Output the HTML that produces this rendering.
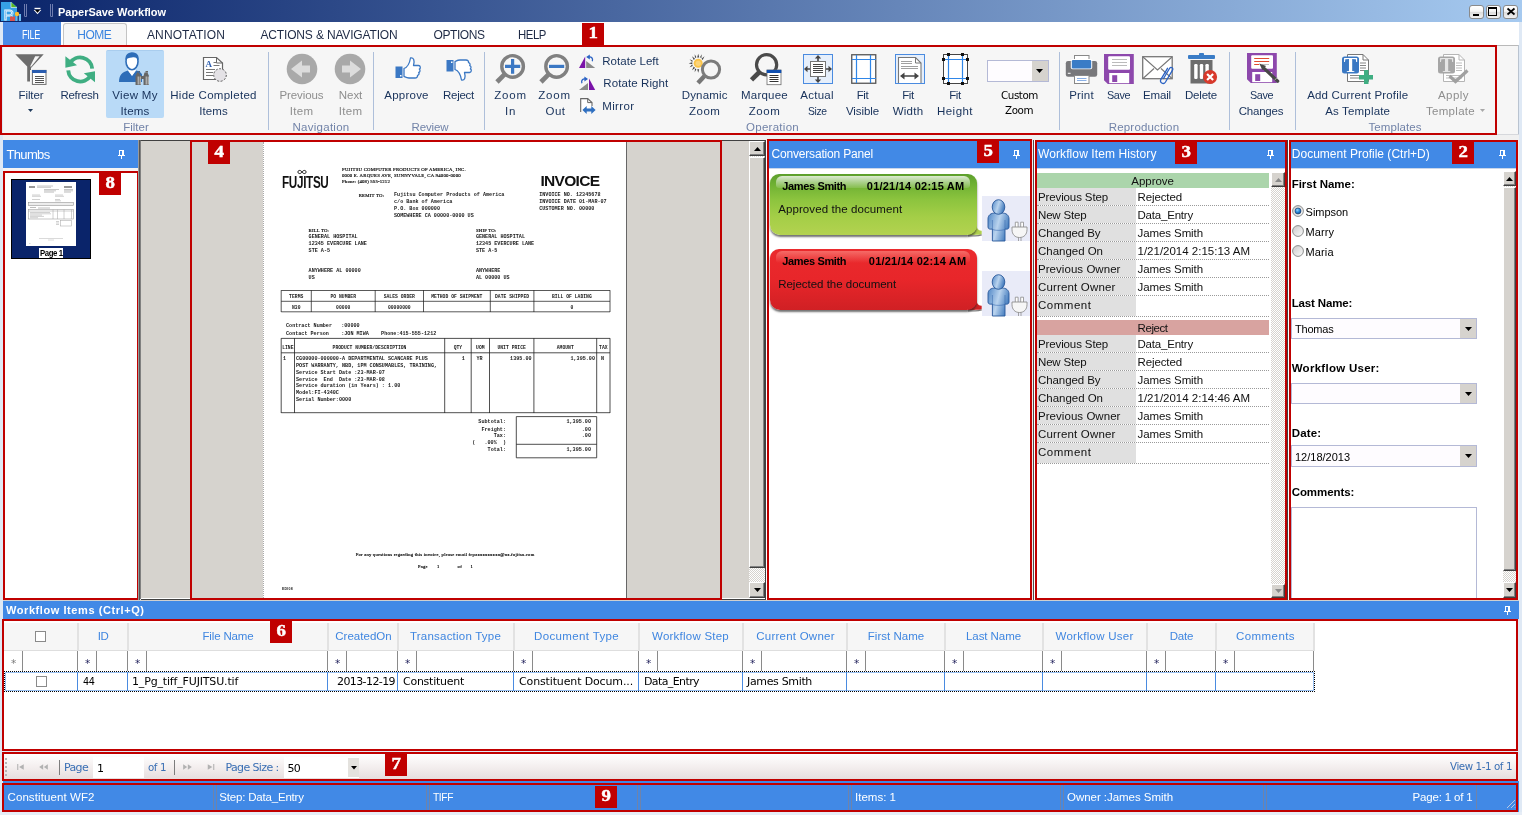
<!DOCTYPE html>
<html lang="en"><head><meta charset="utf-8"><title>PaperSave Workflow</title>
<style>
html,body{margin:0;padding:0}
body{width:1522px;height:815px;position:relative;overflow:hidden;background:#f0f0f0;font-family:"Liberation Sans",sans-serif;font-size:12px}
#app{position:absolute;left:0;top:0;width:1522px;height:815px;will-change:transform}
.b{position:absolute;box-sizing:content-box}
.t{position:absolute;white-space:pre}
svg{overflow:visible}
</style></head>
<body>
<div id="app">
<div class="b" style="left:0px;top:22px;width:1522px;height:793px;background:#dfe9f5;"></div>
<div class="b" style="left:0px;top:0px;width:1522px;height:22px;background:linear-gradient(90deg,#0a246a 0%,#a6caf0 100%);"></div>
<svg class="b" style="left:1px;top:2px" width="20" height="19" viewBox="0 0 20 19"><path d="M0 0h10.500l5.500 5v14H0z" fill="#36a0e6"/><path d="M10 0l6 5.500h-6z" fill="#5cb81e"/><path d="M10 0v5.500h6" fill="none" stroke="#d8ecfa" stroke-width=".7"/><text x="2.500" y="17.500" font-family="Liberation Sans,sans-serif" font-size="15.500" fill="#36a0e6" stroke="#e3f2fc" stroke-width=".9">P</text><rect x="9" y="14.500" width="5" height="4.500" fill="#d9534f"/><path d="M11.500 11.500v3M16 13v6" stroke="#8fd0f5" stroke-width="1"/><rect x="17.800" y="12" width="2.200" height="7" fill="#6cbcf0"/><circle cx="16" cy="12" r="2.200" fill="#fbbd2e"/></svg>
<div class="b" style="left:24px;top:4px;width:1px;height:12px;border:1px solid #6f7db0;border-top:none;border-radius:0 0 2px 2px;"></div>
<div class="b" style="left:50px;top:4px;width:1px;height:12px;border:1px solid #6f7db0;border-top:none;border-radius:0 0 2px 2px;"></div>
<svg class="b" style="left:34px;top:7px" width="8" height="8" viewBox="0 0 8 8"><path d="M.5 1.500h6" stroke="#fff" stroke-width="1.400"/><path d="M-.3 3h7.600l-3.800 4.300z" fill="#fff"/><path d="M.8 2.800h5.400l-2.700 3z" fill="#000"/></svg>
<span class="t" style="left:58.00px;top:5px;font-size:11px;line-height:15px;color:#fff;font-weight:700;letter-spacing:-0.034px;">PaperSave Workflow</span>
<div class="b" style="left:1469px;top:5px;width:13px;height:12px;border:1px solid #8a8a8a;border-radius:3px;background:linear-gradient(#ffffff,#f4f4f4 45%,#dcdcdc 50%,#f0f0f0);"></div>
<div class="b" style="left:1485.5px;top:5px;width:13px;height:12px;border:1px solid #8a8a8a;border-radius:3px;background:linear-gradient(#ffffff,#f4f4f4 45%,#dcdcdc 50%,#f0f0f0);"></div>
<div class="b" style="left:1503px;top:5px;width:13px;height:12px;border:1px solid #8a8a8a;border-radius:3px;background:linear-gradient(#ffffff,#f4f4f4 45%,#dcdcdc 50%,#f0f0f0);"></div>
<div class="b" style="left:1473px;top:14px;width:6px;height:2px;background:#000;"></div>
<div class="b" style="left:1488px;top:7px;width:7px;height:6px;border:1px solid #000;border-top:2px solid #000;"></div>
<svg class="b" style="left:1507px;top:8px" width="8" height="7" viewBox="0 0 8 7"><path d="M0.5 0.5l7 6M7.5 0.5l-7 6" stroke="#000" stroke-width="1.700"/></svg>
<div class="b" style="left:3px;top:22px;width:1516px;height:23px;background:#fff;"></div>
<div class="b" style="left:3px;top:22px;width:58px;height:23px;background:#4a8be6;"></div>
<span class="t" style="left:22.30px;top:28px;font-size:12px;line-height:14px;color:#fff;letter-spacing:-0.450px;transform:scaleX(0.7646);transform-origin:0 0;">FILE</span>
<div class="b" style="left:63px;top:23px;width:62px;height:23px;background:#f6f6f6;border:1px solid #c4c4c4;border-bottom:none;border-radius:3px 3px 0 0;"></div>
<span class="t" style="left:77.30px;top:28px;font-size:12px;line-height:14px;color:#3a84e0;letter-spacing:-0.500px;">HOME</span>
<span class="t" style="left:147.00px;top:28px;font-size:12px;line-height:14px;color:#1e2a45;letter-spacing:0.111px;">ANNOTATION</span>
<span class="t" style="left:260.50px;top:28px;font-size:12px;line-height:14px;color:#1e2a45;letter-spacing:-0.162px;">ACTIONS &amp; NAVIGATION</span>
<span class="t" style="left:433.50px;top:28px;font-size:12px;line-height:14px;color:#1e2a45;letter-spacing:-0.429px;">OPTIONS</span>
<span class="t" style="left:517.50px;top:28px;font-size:12px;line-height:14px;color:#1e2a45;letter-spacing:-0.450px;transform:scaleX(0.9476);transform-origin:0 0;">HELP</span>
<div class="b" style="left:582px;top:23px;width:22px;height:22px;background:#c00000;"></div>
<span class="t" style="left:588.58px;top:22.5px;font-size:16.5px;line-height:20px;color:#fff;font-weight:700;font-family:'Liberation Serif',serif;-webkit-text-stroke:.45px #fff;transform:scaleX(1.14);transform-origin:50% 50%;">1</span>
<div class="b" style="left:3px;top:45px;width:1515px;height:90px;background:#f6f6f6;border-top:1px solid #b9b9b9;height:89px;"></div>
<div class="b" style="left:1518px;top:45px;width:1px;height:90px;background:#b9c3d0;"></div>
<div class="b" style="left:3px;top:135px;width:1516px;height:4px;background:#f0f0f0;"></div>
<div class="b" style="left:3px;top:134px;width:1516px;height:1px;background:#d6d8dc;"></div>
<div class="b" style="left:0px;top:45px;width:1493px;height:86px;border:2px solid #c00000;"></div>
<div class="b" style="left:106px;top:50px;width:58px;height:68px;background:#b9daf7;border-radius:2px;border-top:1px solid #a9cdee;height:67px;"></div>
<div class="b" style="left:268px;top:52px;width:1px;height:78px;background:#aebfda;"></div>
<div class="b" style="left:373px;top:52px;width:1px;height:78px;background:#aebfda;"></div>
<div class="b" style="left:484px;top:52px;width:1px;height:78px;background:#aebfda;"></div>
<div class="b" style="left:1059px;top:52px;width:1px;height:78px;background:#aebfda;"></div>
<div class="b" style="left:1229px;top:52px;width:1px;height:78px;background:#aebfda;"></div>
<div class="b" style="left:1295px;top:52px;width:1px;height:78px;background:#aebfda;"></div>
<span class="t" style="left:18.50px;top:88px;font-size:11.5px;line-height:14px;color:#17315a;letter-spacing:-0.093px;">Filter</span>
<svg class="b" style="left:28px;top:109px" width="6" height="4" viewBox="0 0 6 4"><path d="M0 0h5l-2.5 3z" fill="#1e395b"/></svg>
<span class="t" style="left:60.50px;top:88px;font-size:11.5px;line-height:14px;color:#17315a;letter-spacing:-0.324px;">Refresh</span>
<span class="t" style="left:112.25px;top:88px;font-size:11.5px;line-height:14px;color:#17315a;letter-spacing:0.322px;">View My</span>
<span class="t" style="left:120.50px;top:104px;font-size:11.5px;line-height:14px;color:#17315a;letter-spacing:0.177px;">Items</span>
<span class="t" style="left:170.25px;top:88px;font-size:11.5px;line-height:14px;color:#17315a;letter-spacing:0.289px;">Hide Completed</span>
<span class="t" style="left:199.25px;top:104px;font-size:11.5px;line-height:14px;color:#17315a;letter-spacing:0.077px;">Items</span>
<span class="t" style="left:279.50px;top:88px;font-size:11.5px;line-height:14px;color:#8e8e8e;letter-spacing:-0.093px;">Previous</span>
<span class="t" style="left:289.75px;top:104px;font-size:11.5px;line-height:14px;color:#8e8e8e;letter-spacing:0.284px;">Item</span>
<span class="t" style="left:338.75px;top:88px;font-size:11.5px;line-height:14px;color:#8e8e8e;letter-spacing:-0.036px;">Next</span>
<span class="t" style="left:338.75px;top:104px;font-size:11.5px;line-height:14px;color:#8e8e8e;letter-spacing:0.284px;">Item</span>
<span class="t" style="left:384.25px;top:88px;font-size:11.5px;line-height:14px;color:#17315a;letter-spacing:0.238px;">Approve</span>
<span class="t" style="left:443.00px;top:88px;font-size:11.5px;line-height:14px;color:#17315a;letter-spacing:-0.266px;">Reject</span>
<span class="t" style="left:494.25px;top:88px;font-size:11.5px;line-height:14px;color:#17315a;letter-spacing:0.776px;">Zoom</span>
<span class="t" style="left:505.00px;top:104px;font-size:11.5px;line-height:14px;color:#17315a;letter-spacing:0.705px;">In</span>
<span class="t" style="left:538.25px;top:88px;font-size:11.5px;line-height:14px;color:#17315a;letter-spacing:0.776px;">Zoom</span>
<span class="t" style="left:545.50px;top:104px;font-size:11.5px;line-height:14px;color:#17315a;letter-spacing:0.488px;">Out</span>
<span class="t" style="left:602.30px;top:54px;font-size:11.5px;line-height:14px;color:#17315a;letter-spacing:0.022px;">Rotate Left</span>
<span class="t" style="left:603.30px;top:76px;font-size:11.5px;line-height:14px;color:#17315a;letter-spacing:0.090px;">Rotate Right</span>
<span class="t" style="left:602.30px;top:99px;font-size:11.5px;line-height:14px;color:#17315a;letter-spacing:0.330px;">Mirror</span>
<span class="t" style="left:681.70px;top:88px;font-size:11.5px;line-height:14px;color:#17315a;letter-spacing:0.181px;">Dynamic</span>
<span class="t" style="left:688.95px;top:104px;font-size:11.5px;line-height:14px;color:#17315a;letter-spacing:0.526px;">Zoom</span>
<span class="t" style="left:741.00px;top:88px;font-size:11.5px;line-height:14px;color:#17315a;letter-spacing:0.230px;">Marquee</span>
<span class="t" style="left:748.75px;top:104px;font-size:11.5px;line-height:14px;color:#17315a;letter-spacing:0.526px;">Zoom</span>
<span class="t" style="left:800.25px;top:88px;font-size:11.5px;line-height:14px;color:#17315a;letter-spacing:0.256px;">Actual</span>
<span class="t" style="left:807.75px;top:104px;font-size:11.5px;line-height:14px;color:#17315a;letter-spacing:-0.450px;transform:scaleX(0.8993);transform-origin:0 0;">Size</span>
<span class="t" style="left:856.75px;top:88px;font-size:11.5px;line-height:14px;color:#17315a;letter-spacing:-0.425px;">Fit</span>
<span class="t" style="left:846.00px;top:104px;font-size:11.5px;line-height:14px;color:#17315a;letter-spacing:-0.096px;">Visible</span>
<span class="t" style="left:902.25px;top:88px;font-size:11.5px;line-height:14px;color:#17315a;letter-spacing:-0.425px;">Fit</span>
<span class="t" style="left:892.75px;top:104px;font-size:11.5px;line-height:14px;color:#17315a;letter-spacing:0.221px;">Width</span>
<span class="t" style="left:949.25px;top:88px;font-size:11.5px;line-height:14px;color:#17315a;letter-spacing:-0.425px;">Fit</span>
<span class="t" style="left:937.00px;top:104px;font-size:11.5px;line-height:14px;color:#17315a;letter-spacing:0.460px;">Height</span>
<span class="t" style="left:1001.00px;top:89px;font-size:11px;line-height:14px;color:#000;font-family:'DejaVu Sans',sans-serif;letter-spacing:-0.450px;transform:scaleX(0.9381);transform-origin:0 0;">Custom</span>
<span class="t" style="left:1005.00px;top:104px;font-size:11px;line-height:14px;color:#000;font-family:'DejaVu Sans',sans-serif;letter-spacing:-0.450px;transform:scaleX(0.9361);transform-origin:0 0;">Zoom</span>
<span class="t" style="left:1069.25px;top:88px;font-size:11.5px;line-height:14px;color:#17315a;letter-spacing:0.171px;">Print</span>
<span class="t" style="left:1107.00px;top:88px;font-size:11.5px;line-height:14px;color:#17315a;letter-spacing:-0.450px;transform:scaleX(0.9422);transform-origin:0 0;">Save</span>
<span class="t" style="left:1143.00px;top:88px;font-size:11.5px;line-height:14px;color:#17315a;letter-spacing:-0.151px;">Email</span>
<span class="t" style="left:1185.00px;top:88px;font-size:11.5px;line-height:14px;color:#17315a;letter-spacing:-0.207px;">Delete</span>
<span class="t" style="left:1249.50px;top:88px;font-size:11.5px;line-height:14px;color:#17315a;letter-spacing:-0.450px;transform:scaleX(0.9422);transform-origin:0 0;">Save</span>
<span class="t" style="left:1238.75px;top:104px;font-size:11.5px;line-height:14px;color:#17315a;letter-spacing:-0.219px;">Changes</span>
<span class="t" style="left:1307.20px;top:88px;font-size:11.5px;line-height:14px;color:#17315a;letter-spacing:0.169px;">Add Current Profile</span>
<span class="t" style="left:1325.20px;top:104px;font-size:11.5px;line-height:14px;color:#17315a;letter-spacing:0.175px;">As Template</span>
<span class="t" style="left:1438.00px;top:88px;font-size:11.5px;line-height:14px;color:#8e8e8e;letter-spacing:0.447px;">Apply</span>
<span class="t" style="left:1426.00px;top:104px;font-size:11.5px;line-height:14px;color:#8e8e8e;letter-spacing:0.292px;">Template</span>
<svg class="b" style="left:1480px;top:109px" width="6" height="4" viewBox="0 0 6 4"><path d="M0 0h5l-2.5 3z" fill="#a8a8a8"/></svg>
<span class="t" style="left:123.25px;top:120px;font-size:11.5px;line-height:14px;color:#7283a8;letter-spacing:-0.009px;">Filter</span>
<span class="t" style="left:292.50px;top:120px;font-size:11.5px;line-height:14px;color:#7283a8;letter-spacing:0.266px;">Navigation</span>
<span class="t" style="left:411.50px;top:120px;font-size:11.5px;line-height:14px;color:#7283a8;letter-spacing:-0.118px;">Review</span>
<span class="t" style="left:746.00px;top:120px;font-size:11.5px;line-height:14px;color:#7283a8;letter-spacing:0.277px;">Operation</span>
<span class="t" style="left:1108.75px;top:120px;font-size:11.5px;line-height:14px;color:#7283a8;letter-spacing:0.175px;">Reproduction</span>
<span class="t" style="left:1368.50px;top:120px;font-size:11.5px;line-height:14px;color:#7283a8;letter-spacing:0.065px;">Templates</span>
<svg class="b" style="left:15px;top:53px" width="32" height="32" viewBox="0 0 32 32"><path d="M.3 1.300h28.400L16 15v2h-1v11.500h-2.800V13.500z" fill="#6d6d6d"/><path d="M20.200 3.200h4.400L16.300 13.500h-1.200z" fill="#f6f6f6"/><rect x="17.400" y="17.400" width="13.600" height="14" fill="#fff" stroke="#6d6d6d"/><rect x="17" y="17" width="14.400" height="3" fill="#2a5db0"/><path d="M20 23.500h9M20 25.500h9M20 27.500h9M20 29.500h9" stroke="#555" stroke-width="1"/></svg>
<svg class="b" style="left:64px;top:53px" width="32" height="32" viewBox="0 0 32 32"><g fill="none" stroke="#3fae82" stroke-width="3.900"><path d="M6 10.100A12 12 0 0 1 28.170 15.660"/><path d="M26.380 22.860A12 12 0 0 1 4.230 17.340"/></g><path d="M1.400 3.200v11.550l11.600-2.550z" fill="#3fae82"/><path d="M31 18.200v11.100L19.850 20.300z" fill="#3fae82"/></svg>
<svg class="b" style="left:119px;top:52px" width="32" height="33" viewBox="0 0 32 33"><path d="M0 30c0-7 3-10 9-11.5l4 5 4-5c3 .6 5 2 6 4v7.5z" fill="#2e6db8"/><path d="M9 18.5l4 5.5 4-5.5-1.5-1.5h-5z" fill="#fff"/><ellipse cx="13" cy="9.5" rx="6" ry="8.2" fill="#fff" stroke="#2e6db8" stroke-width="1.6"/><path d="M6.5 8C6 2 9.500 .5 13.500 .5S20.500 3 19.600 8.500C18 5.500 16 5 13 5.500S8 6 6.500 8z" fill="#2e6db8"/><path d="M16.500 33v-9l1.500-3.500h3l1 3.500h2.500l1-3.500h3l1.500 3.500v9h-5.500v-6h-2.500v6z" fill="#666"/><path d="M18.500 19h2.500v1.500h-2.500zM26.500 19h2.500v1.500h-2.500z" fill="#666"/><path d="M19.200 24.500v8M21.200 24.500v8M27.200 24.500v8M29.200 24.500v8" stroke="#e8e8e8" stroke-width=".8"/><path d="M22 23l-3-4" stroke="#2e6db8" stroke-width="1"/></svg>
<svg class="b" style="left:202px;top:56px" width="26" height="26" viewBox="0 0 26 26"><path d="M1.500 1.500h13l6 5.500V23.500H1.500z" fill="#fff" stroke="#666" stroke-width="1.2"/><path d="M14.500 1.500v5.500h6" fill="none" stroke="#666" stroke-width="1"/><text x="3.500" y="10.500" font-family="Liberation Serif,serif" font-size="9" font-weight="700" fill="#2e5fb0">A</text><path d="M11.500 6.500h3M11.500 9.500h6M4 13.500h9M4 16.500h7M4 19.500h7" stroke="#777" stroke-width="1"/><circle cx="18" cy="19" r="6.300" fill="#e4e2e6" stroke="#555" stroke-width="1" stroke-dasharray="2 1.500"/></svg>
<svg class="b" style="left:286px;top:53px" width="32" height="32" viewBox="0 0 32 32"><circle cx="16" cy="16" r="15.300" fill="#a9a9a9"/><path d="M5 16l11-8.500v5h8v7h-8v5z" fill="#dcdcdc"/></svg>
<svg class="b" style="left:334px;top:53px" width="32" height="32" viewBox="0 0 32 32"><circle cx="16" cy="16" r="15.300" fill="#a9a9a9"/><path d="M27 16L16 7.500v5H8v7h8v5z" fill="#dcdcdc"/></svg>
<svg class="b" style="left:394.7px;top:56px" width="27" height="24" viewBox="0 0 27 24"><rect x=".5" y="10.500" width="7" height="11.500" fill="#3b78c4"/><rect x="5" y="19" width="1.500" height="1.500" fill="#fff"/><path d="M9 12.500c3-1 5.500-4.500 6.500-10.500 3-.5 4.500 2 3 7.500h5c2 0 2.500 3 .8 3.600 1.200 1 .8 3-.6 3.300 .8 1.200 .2 2.800-1.200 3 .3 1.500-.8 2.600-2.500 2.600h-6c-2 0-3.500-.8-5-1.500z" fill="#fff" stroke="#3b78c4" stroke-width="1.300" stroke-linejoin="round"/></svg>
<svg class="b" style="left:445.7px;top:58px" width="27" height="24" viewBox="0 0 27 24"><rect x=".5" y="2" width="7" height="11.500" fill="#3b78c4"/><rect x="5" y="3.500" width="1.500" height="1.500" fill="#fff"/><path d="M9 11.500c3 1 5.500 4.500 6.500 10.500 3 .5 4.500-2 3-7.500h5c2 0 2.500-3 .8-3.600 1.200-1 .8-3-.6-3.300 .8-1.200 .2-2.800-1.200-3 .3-1.500-.8-2.600-2.500-2.600h-6c-2 0-3.500 .8-5 1.500z" fill="#fff" stroke="#3b78c4" stroke-width="1.300" stroke-linejoin="round"/></svg>
<svg class="b" style="left:494px;top:53px" width="32" height="32" viewBox="0 0 32 32"><path d="M11.300 20.700l-8.300 8.300" stroke="#808080" stroke-width="4.700"/><circle cx="18.600" cy="13.400" r="10.800" fill="#f6f6f6" stroke="#808080" stroke-width="3.400"/><path d="M11 13.400h15.200M18.600 6v14.800" stroke="#3b78c4" stroke-width="3.200"/></svg>
<svg class="b" style="left:537.8px;top:53px" width="32" height="32" viewBox="0 0 32 32"><path d="M11.300 20.700l-8.300 8.300" stroke="#808080" stroke-width="4.700"/><circle cx="18.600" cy="13.400" r="10.800" fill="#f6f6f6" stroke="#808080" stroke-width="3.400"/><path d="M11 13.400h15.200" stroke="#3b78c4" stroke-width="3.200"/></svg>
<svg class="b" style="left:579px;top:54px" width="17" height="15" viewBox="0 0 17 15"><path d="M6.200 2.600v11.400H0z" fill="#7a12a8"/><path d="M7.200 7l9 7h-9z" fill="#8a8a8a"/><path d="M13.300 7.300c1-3-1-5-3.800-4.300" fill="none" stroke="#2a62c4" stroke-width="1.300"/><path d="M7.200 3l3.600-2.600v5z" fill="#2a62c4"/></svg>
<svg class="b" style="left:579px;top:76px" width="17" height="15" viewBox="0 0 17 15"><path d="M10 2.600v11.400h6.200z" fill="#7a12a8"/><path d="M9 7L0 14h9z" fill="#8a8a8a"/><path d="M2.900 7.300c-1-3 1-5 3.800-4.300" fill="none" stroke="#2a62c4" stroke-width="1.300"/><path d="M9 3L5.400 .4v5z" fill="#2a62c4"/></svg>
<svg class="b" style="left:579.5px;top:98px" width="17" height="17" viewBox="0 0 17 17"><path d="M.7 14V.6h7l4.300 4V8" fill="#fff" stroke="#666" stroke-width="1.100"/><path d="M7.700 .6v4h4.300" fill="none" stroke="#666"/><path d="M2.400 12l4.300-4v2.600h4.600V8l4.300 4-4.300 4v-2.600H6.700V16z" fill="#2f6fc0"/></svg>
<svg class="b" style="left:689px;top:53px" width="33" height="32" viewBox="0 0 33 32"><g fill="#444"><path d="M9.200 .8l1 3.600h-2zM9.200 19.800l1-3.600h-2zM-.3 10.300l3.600 1v-2zM3 3.300l3 2.400-1.200 1.300zM15.500 3.300l-3 2.400 1.200 1.300zM3 17.300l3-2.400-1.200-1.300zM5.700 1.300l1.700 3-1.400.7zM12.700 1.300l-1.700 3 1.400.7zM.6 6.300l3.200 1.400-.7 1.400zM.6 14.300l3.200-1.400-.7-1.400zM5.700 19.300l1.700-3-1.400-.7z"/></g><circle cx="9.200" cy="10.300" r="4.500" fill="#fbc44a"/><circle cx="9.200" cy="10.300" r="2.600" fill="#fdd57a"/><path d="M15.500 23l-6.500 7" stroke="#777" stroke-width="4.400"/><circle cx="22" cy="16.500" r="8.600" fill="#f6f6f6" fill-opacity=".75" stroke="#7c7c7c" stroke-width="3"/></svg>
<svg class="b" style="left:749px;top:53px" width="33" height="32" viewBox="0 0 33 32"><path d="M10.500 19l-8 7.800" stroke="#4a4a4a" stroke-width="4.600"/><circle cx="17.600" cy="11.700" r="10.100" fill="#f6f6f6" stroke="#4a4a4a" stroke-width="3.200"/><rect x="18" y="17" width="14" height="14.700" fill="#fff" stroke="#6d6d6d" stroke-width=".8"/><rect x="17.700" y="16.900" width="14.600" height="3.100" fill="#0f4fb0"/><path d="M20.500 22.500h9M20.500 24.500h9M20.500 26.500h9M20.500 28.500h9" stroke="#333" stroke-width="1"/></svg>
<svg class="b" style="left:803px;top:54px" width="30" height="30" viewBox="0 0 30 30"><rect x=".5" y=".5" width="29" height="29" fill="#e6effb" stroke="#4a8be0"/><rect x="7.500" y="7.500" width="15" height="15" fill="#fff" stroke="#777"/><path d="M10 10.500h10M10 12.500h10M10 14.500h10M10 16.500h10M10 18.500h10" stroke="#444" stroke-width="1"/><path d="M15 1l3.200 3.500h-2.400V7h-1.600V4.500h-2.400zM15 29l3.200-3.500h-2.400V23h-1.600v2.500h-2.400zM1 15l3.500-3.200v2.400H7v1.600H4.500v2.400zM29 15l-3.500-3.200v2.400H23v1.600h2.500v2.400z" fill="#444"/></svg>
<svg class="b" style="left:851px;top:54px" width="26" height="30" viewBox="0 0 26 30"><rect x=".75" y=".75" width="24" height="28.500" fill="#fff" stroke="#555" stroke-width="1.300"/><path d="M5.500 1v28M19.500 1v28M1 5.500h24M1 24.500h24" stroke="#2f86e8" stroke-width="1.200"/></svg>
<svg class="b" style="left:895px;top:54px" width="31" height="30" viewBox="0 0 31 30"><rect x=".5" y=".5" width="29" height="29" fill="#e6effb" stroke="#4a8be0"/><path d="M3.500 29V3.500h17l5.500 5.500V29" fill="#fff" stroke="#777" stroke-width="1.100"/><path d="M20.500 3.500V9H26" fill="none" stroke="#777"/><path d="M6 7.500h11M6 9.500h11M6 12.500h17M6 14.500h17" stroke="#888" stroke-width=".8"/><path d="M5 22l4.500-3.500v2.700h10v-2.700L24 22l-4.500 3.500v-2.700h-10v2.700z" fill="#444"/></svg>
<svg class="b" style="left:942px;top:53px" width="27" height="32" viewBox="0 0 27 32"><rect x="1.500" y="1.500" width="24" height="29" fill="#fff" stroke="#444" stroke-width="1"/><path d="M6.500 2v28M20.500 2v28M2 6.500h23M2 25.500h23" stroke="#2f86e8" stroke-width="1.200"/><g fill="#111"><rect x="5" y="0" width="3" height="3"/><rect x="19" y="0" width="3" height="3"/><rect x="5" y="29" width="3" height="3"/><rect x="19" y="29" width="3" height="3"/><rect x="0" y="5" width="3" height="3"/><rect x="0" y="24" width="3" height="3"/><rect x="24" y="5" width="3" height="3"/><rect x="24" y="24" width="3" height="3"/></g></svg>
<div class="b" style="left:987px;top:60px;width:60px;height:20px;background:#fefcff;border:1px solid #b4b9d6;"></div>
<div class="b" style="left:1032px;top:61px;width:16px;height:20px;background:#d6d3ce;"></div>
<svg class="b" style="left:1036px;top:69px" width="8" height="5" viewBox="0 0 8 5"><path d="M0 0h7l-3.500 4z" fill="#000"/></svg>
<svg class="b" style="left:1065px;top:54px" width="33" height="30" viewBox="0 0 33 30"><rect x="9.500" y="1.500" width="14.500" height="8" fill="#fff" stroke="#888"/><rect x=".8" y="7" width="31.400" height="15.800" rx="2.200" fill="#78787b"/><rect x="5.800" y="5" width="21.400" height="10.200" rx="1.800" fill="#fff"/><rect x="6.800" y="6" width="19.400" height="8.400" rx="1.200" fill="#3a7cc6"/><rect x="9.500" y="21.500" width="14.500" height="8" fill="#fff" stroke="#888"/><path d="M12 24.500h9.500M12 26.500h9.500" stroke="#8ab0e6" stroke-width="1"/><rect x="2.800" y="18.800" width="2.800" height="1" fill="#fff"/></svg>
<svg class="b" style="left:1103.5px;top:53.5px" width="31" height="31" viewBox="0 0 31 31"><path d="M0 0h29.800v30H3.800L0 26.200z" fill="#8d48ac"/><rect x="4.200" y="2.200" width="21.800" height="13.600" rx="1" fill="#fff"/><path d="M8 5.500h15M8 8.500h15M8 11.500h15" stroke="#bbb" stroke-width="1"/><rect x="5.200" y="19" width="20" height="10.200" fill="#fff"/><rect x="8.200" y="21.200" width="5" height="6.800" fill="#8d48ac"/></svg>
<svg class="b" style="left:1142px;top:56px" width="32" height="29" viewBox="0 0 32 29"><rect x=".7" y=".7" width="29.500" height="22" fill="#fff" stroke="#777" stroke-width="1.300"/><path d="M1 1l14.500 13L30 1M1 22.500l11-10M30 22.500l-11-10" fill="none" stroke="#777" stroke-width="1.100"/><path d="M21.500 22.500l6-10c1.400-2.200 4.300-.5 3 1.700l-7 11.800c-2 3.200-6.500 .5-4.600-2.700l6.600-11" fill="none" stroke="#2a62c4" stroke-width="1.300" stroke-linecap="round"/></svg>
<svg class="b" style="left:1188px;top:52px" width="30" height="33" viewBox="0 0 30 33"><rect x="0" y="3" width="27" height="4" rx="1" fill="#3a7cc6"/><rect x="11" y="1" width="5" height="3" rx=".8" fill="#3a7cc6"/><path d="M2.500 8h22v23.500h-22z" fill="#6d6d6d"/><g fill="#fff"><rect x="6.200" y="12" width="3.400" height="15" rx="1.200"/><rect x="11.800" y="12" width="3.400" height="15" rx="1.200"/><rect x="17.400" y="12" width="3.400" height="10" rx="1.200"/></g><circle cx="22.100" cy="25" r="7" fill="#d8392b"/><path d="M19.100 22l6 6M25.100 22l-6 6" stroke="#fff" stroke-width="2.200"/></svg>
<svg class="b" style="left:1246.5px;top:53px" width="31" height="31" viewBox="0 0 31 31"><path d="M0 0h29.800v30H3.800L0 26.200z" fill="#8d48ac"/><rect x="4.200" y="2.200" width="21.800" height="13.600" rx="1" fill="#fff"/><path d="M7.200 5.500h15M7.200 8.500h15M7.200 11.500h5" stroke="#e04a2f" stroke-width="1"/><path d="M15 11.500h7" stroke="#bbb" stroke-width="1"/><rect x="5.200" y="19" width="20" height="10.200" fill="#fff"/><rect x="8.200" y="21.200" width="5" height="6.800" fill="#8d48ac"/></svg>
<svg class="b" style="left:1258px;top:60px" width="22" height="24" viewBox="0 0 22 24"><path d="M5.500 7.800l14.200 13.400" stroke="#484848" stroke-width="3.200" stroke-linecap="round"/><path d="M1.300 3.500l6.800 2.600-3.800 3.800z" fill="#484848"/><path d="M16.500 20.300l2.600-2.700" stroke="#b8b8b8" stroke-width=".9"/></svg>
<svg class="b" style="left:1342px;top:54px" width="32" height="30" viewBox="0 0 32 30"><path d="M5.500 .5h15.500l5.500 5.500V27.500H5.500z" fill="#fff" stroke="#777" stroke-width="1"/><path d="M21 .5V6h5.500" fill="none" stroke="#777"/><path d="M18 9h6M18 11.500h6M18 14h6M18 16.500h6M8 21.500h16M8 24h16" stroke="#777" stroke-width=".9"/><rect x="0" y="2.500" width="17" height="17" rx="2.500" fill="#3a78c3"/><text x="8.500" y="17.800" text-anchor="middle" font-family="Liberation Serif,serif" font-size="20.500" font-weight="700" fill="#fff">T</text></svg>
<svg class="b" style="left:1359px;top:70px" width="14" height="14" viewBox="0 0 14 14"><path d="M5 0h4.500v5H14v4.500H9.500V14H5V9.500H0V5h5z" fill="#3fae82"/></svg>
<svg class="b" style="left:1438px;top:54px" width="32" height="30" viewBox="0 0 32 30"><path d="M5.500 .5h15.500l5.500 5.500V27.500H5.500z" fill="#fff" stroke="#b5b5b5" stroke-width="1"/><path d="M21 .5V6h5.500" fill="none" stroke="#b5b5b5"/><path d="M18 9h6M18 11.500h6M18 14h6M18 16.500h6M8 21.500h16M8 24h16" stroke="#b5b5b5" stroke-width=".9"/><rect x="0" y="2.500" width="17" height="17" rx="2.500" fill="#a6a6a6"/><text x="8.500" y="17.800" text-anchor="middle" font-family="Liberation Serif,serif" font-size="20.500" font-weight="700" fill="#e6e6e6">T</text></svg>
<svg class="b" style="left:1448px;top:69px" width="21" height="15" viewBox="0 0 21 15"><path d="M1.500 7l6 5.500L19.500 1.500" fill="none" stroke="#a0a0a0" stroke-width="3.200"/></svg>
<div class="b" style="left:3px;top:139px;width:1516px;height:462px;background:#f0f0f0;"></div>
<div class="b" style="left:3px;top:140px;width:135px;height:28px;background:#4189e6;"></div>
<span class="t" style="left:6.50px;top:147px;font-size:13px;line-height:16px;color:#fff;letter-spacing:-0.660px;">Thumbs</span>
<svg class="b" style="left:118px;top:150px" width="7" height="9" viewBox="0 0 7 9"><g fill="#fff" shape-rendering="crispEdges"><rect x="1" y="0" width="5" height="1"/><rect x="1" y="0" width="1" height="5"/><rect x="4" y="0" width="2" height="5"/><rect x="0" y="5" width="7" height="1"/><rect x="3" y="6" width="1" height="3"/></g></svg>
<div class="b" style="left:3px;top:168px;width:136px;height:3px;background:#f4f4f4;"></div>
<div class="b" style="left:5px;top:173px;width:132px;height:425px;background:#fff;"></div>
<div class="b" style="left:3px;top:171px;width:132px;height:425px;border:2px solid #c00000;"></div>
<div class="b" style="left:11px;top:179px;width:78px;height:78px;background:#0a246a;border:1px solid #000;"></div>
<div class="b" style="left:26px;top:182px;width:50px;height:64px;background:#fff;"></div>
<div class="b" style="left:39px;top:248px;width:24px;height:10px;background:#fff;"></div>
<span class="t" style="left:39.70px;top:248px;font-size:8.5px;line-height:10px;color:#000;font-weight:700;letter-spacing:-0.450px;transform:scaleX(0.9148);transform-origin:0 0;">Page 1</span>
<div class="b" style="left:99px;top:173px;width:22px;height:22px;background:#c00000;"></div>
<span class="t" style="left:105.58px;top:172.5px;font-size:16.5px;line-height:20px;color:#fff;font-weight:700;font-family:'Liberation Serif',serif;-webkit-text-stroke:.45px #fff;transform:scaleX(1.14);transform-origin:50% 50%;">8</span>
<svg class="b" style="left:26px;top:182px" width="50" height="64" viewBox="0 0 50 64"><g stroke="#aaa" stroke-width=".55" fill="none"><path d="M3 5h6M38 5h8" stroke="#333" stroke-width="1.100"/><path d="M11 4h16M11 5.300h14" stroke="#999"/><path d="M18 7.500h15M18 8.800h12M18 10.100h10M38 7.500h9M38 8.800h9M38 10.100h7" stroke="#999"/><path d="M6 13h8M6 14.300h9M29 13h8M29 14.300h9M6 17.500h8M29 17.500h5M29 18.800h6" stroke="#aaa"/><rect x="2.500" y="20.500" width="45" height="3" stroke="#888"/><path d="M2.500 22h45" stroke="#bbb"/><path d="M4 25.500h6M12 26h12" stroke="#888"/><rect x="2.500" y="27.500" width="45" height="9.500" stroke="#999"/><path d="M2.500 29h45M27 27.500v9.500M31.500 27.500v9.500M38 27.500v9.500M45.500 27.500v9.500" stroke="#aaa"/><path d="M4 30.500h20M4 31.800h21M4 33.100h12M4 34.400h14M4 35.700h8" stroke="#aaa"/><rect x="34.500" y="38.500" width="11" height="5.500" stroke="#aaa"/><path d="M30 39.500h3M30 41h3M30 42.500h3" stroke="#aaa"/><path d="M13 56.500h24M22 58h6M3 61.500h1.500" stroke="#bbb"/></g></svg>
<div class="b" style="left:138px;top:140px;width:1px;height:460px;background:#9a9a9a;"></div>
<div class="b" style="left:139px;top:140px;width:1px;height:460px;background:#555;"></div>
<div class="b" style="left:140px;top:140px;width:625px;height:459px;background:#d6d3ce;border-top:1px solid #404040;border-left:1px solid #808080;width:624px;height:458px;"></div>
<div class="b" style="left:141px;top:598px;width:49px;height:1px;background:#fff;"></div>
<div class="b" style="left:141px;top:599px;width:49px;height:1px;background:#404040;"></div>
<div class="b" style="left:765px;top:140px;width:1px;height:460px;background:#404040;"></div>
<div class="b" style="left:766px;top:140px;width:1px;height:460px;background:#fff;"></div>
<div class="b" style="left:749px;top:141px;width:16px;height:457px;background:repeating-conic-gradient(#fff 0 25%,#d6d3ce 0 50%) 0 0/2px 2px;"></div>
<div class="b" style="left:749px;top:141px;width:14px;height:13px;background:#d6d3ce;border:1px solid;border-color:#fff #404040 #404040 #fff;box-shadow:inset -1px -1px 0 #808080;"></div>
<svg class="b" style="left:753.5px;top:146.5px" width="7" height="4" viewBox="0 0 7 4"><path d="M0 4h7l-3.500-4z" fill="#000"/></svg>
<div class="b" style="left:749px;top:157px;width:14px;height:409px;background:#d6d3ce;border:1px solid;border-color:#fff #404040 #404040 #fff;box-shadow:inset -1px -1px 0 #808080;"></div>
<div class="b" style="left:749px;top:582px;width:14px;height:14px;background:#d6d3ce;border:1px solid;border-color:#fff #404040 #404040 #fff;box-shadow:inset -1px -1px 0 #808080;"></div>
<svg class="b" style="left:753.5px;top:588.0px" width="7" height="4" viewBox="0 0 7 4"><path d="M0 0h7l-3.500 4z" fill="#000"/></svg>
<div class="b" style="left:722px;top:598px;width:43px;height:1px;background:#fff;"></div>
<div class="b" style="left:722px;top:599px;width:43px;height:1px;background:#404040;"></div>
<div class="b" style="left:769px;top:141px;width:261px;height:457px;background:#fff;"></div>
<div class="b" style="left:769px;top:141px;width:261px;height:27px;background:#4189e6;"></div>
<div class="b" style="left:769px;top:168px;width:261px;height:1px;background:#c9d6ea;"></div>
<span class="t" style="left:771.50px;top:147px;font-size:12px;line-height:15px;color:#fff;letter-spacing:-0.180px;">Conversation Panel</span>
<svg class="b" style="left:1013px;top:150px" width="7" height="9" viewBox="0 0 7 9"><g fill="#fff" shape-rendering="crispEdges"><rect x="1" y="0" width="5" height="1"/><rect x="1" y="0" width="1" height="5"/><rect x="4" y="0" width="2" height="5"/><rect x="0" y="5" width="7" height="1"/><rect x="3" y="6" width="1" height="3"/></g></svg>
<svg class="b" style="left:968px;top:221px" width="15" height="14" viewBox="0 0 15 14"><path d="M0 14V0h9v6.500c.5 2 2 3 4.700 3.300v3.400C11 13.800 5 14 0 14z" fill="#b0d04f"/><path d="M0 14.800h7c3 0 5-.4 6.700-1" stroke="rgba(40,40,40,.6)" stroke-width="1.300" fill="none"/></svg>
<div class="b" style="left:770px;top:174px;width:207px;height:61px;border-radius:9px 9px 10px 10px;background:linear-gradient(#5d9f2c 0%,#6eb033 16%,#8cc43e 42%,#a4ce47 70%,#b3d250 100%);box-shadow:0 2px 2px rgba(40,40,40,.65);"></div>
<div class="b" style="left:776px;top:176px;width:194px;height:12px;border-radius:6px 6px 3px 3px;background:linear-gradient(rgba(255,255,255,.78),rgba(255,255,255,.12));"></div>
<span class="t" style="left:782.20px;top:179px;font-size:11px;line-height:14px;color:#000;font-weight:700;letter-spacing:-0.351px;">James Smith</span>
<span class="t" style="left:866.80px;top:179px;font-size:11px;line-height:14px;color:#000;font-weight:700;letter-spacing:0.226px;">01/21/14 02:15 AM</span>
<span class="t" style="left:778.20px;top:202px;font-size:11.5px;line-height:15px;color:#111;letter-spacing:0.090px;">Approved the document</span>
<div class="b" style="left:982px;top:196px;width:48px;height:45px;background:#e9ebf8;"></div>
<svg class="b" style="left:982px;top:196px" width="48" height="45" viewBox="0 0 48 45"><defs><linearGradient id="pg174" x1="0" y1="0" x2="1" y2=".35"><stop offset="0" stop-color="#4f86c6"/><stop offset=".55" stop-color="#b9d3ee"/><stop offset="1" stop-color="#4a80c0"/></linearGradient></defs><path d="M6 23c0-4 3-6 7-6h7c4 0 7 2 7 6v8c0 2-2 2.500-4 2v12H10.400V33c-2.400.5-4.400 0-4.400-2z" fill="url(#pg174)" stroke="#27579a" stroke-width=".9"/><path d="M10.400 33V24M23 33V24M10.400 33.500c4 1.200 8.600 1.200 12.600 0" fill="none" stroke="#3a6cb0" stroke-width=".6"/><ellipse cx="16.500" cy="11" rx="6.300" ry="7.300" fill="url(#pg174)" stroke="#27579a" stroke-width=".9"/><path d="M33.300 31v-4.800h2.800V31M38.700 31v-4.800h2.800V31" fill="#fff" stroke="#8a8a8a" stroke-width=".8"/><path d="M30 31h15v2.500c0 5-3 8-7.500 8s-7.500-3-7.500-8z" fill="#f6f6f6" stroke="#8e8e8e" stroke-width=".9"/><path d="M36.500 41.500v3.500M39 41.500v3.500" stroke="#8e8e8e" stroke-width=".8"/></svg>
<svg class="b" style="left:968px;top:296px" width="15" height="14" viewBox="0 0 15 14"><path d="M0 14V0h9v6.500c.5 2 2 3 4.700 3.300v3.400C11 13.800 5 14 0 14z" fill="#cf2024"/><path d="M0 14.800h7c3 0 5-.4 6.700-1" stroke="rgba(40,40,40,.6)" stroke-width="1.300" fill="none"/></svg>
<div class="b" style="left:770px;top:249px;width:207px;height:61px;border-radius:9px 9px 10px 10px;background:linear-gradient(#ea2a2d 0%,#e8262a 50%,#d02024 100%);box-shadow:0 2px 2px rgba(40,40,40,.65);"></div>
<div class="b" style="left:776px;top:251px;width:194px;height:12px;border-radius:6px 6px 3px 3px;background:linear-gradient(rgba(255,160,150,.55),rgba(255,120,110,0));"></div>
<span class="t" style="left:782.20px;top:254px;font-size:11px;line-height:14px;color:#000;font-weight:700;letter-spacing:-0.351px;">James Smith</span>
<span class="t" style="left:868.80px;top:254px;font-size:11px;line-height:14px;color:#000;font-weight:700;letter-spacing:0.226px;">01/21/14 02:14 AM</span>
<span class="t" style="left:778.20px;top:277px;font-size:11.5px;line-height:15px;color:#111;letter-spacing:-0.013px;">Rejected the document</span>
<div class="b" style="left:982px;top:271px;width:48px;height:45px;background:#e9ebf8;"></div>
<svg class="b" style="left:982px;top:271px" width="48" height="45" viewBox="0 0 48 45"><defs><linearGradient id="pg249" x1="0" y1="0" x2="1" y2=".35"><stop offset="0" stop-color="#4f86c6"/><stop offset=".55" stop-color="#b9d3ee"/><stop offset="1" stop-color="#4a80c0"/></linearGradient></defs><path d="M6 23c0-4 3-6 7-6h7c4 0 7 2 7 6v8c0 2-2 2.500-4 2v12H10.400V33c-2.400.5-4.400 0-4.400-2z" fill="url(#pg249)" stroke="#27579a" stroke-width=".9"/><path d="M10.400 33V24M23 33V24M10.400 33.500c4 1.200 8.600 1.200 12.600 0" fill="none" stroke="#3a6cb0" stroke-width=".6"/><ellipse cx="16.500" cy="11" rx="6.300" ry="7.300" fill="url(#pg249)" stroke="#27579a" stroke-width=".9"/><path d="M33.300 31v-4.800h2.800V31M38.700 31v-4.800h2.800V31" fill="#fff" stroke="#8a8a8a" stroke-width=".8"/><path d="M30 31h15v2.500c0 5-3 8-7.500 8s-7.500-3-7.500-8z" fill="#f6f6f6" stroke="#8e8e8e" stroke-width=".9"/><path d="M36.500 41.500v3.500M39 41.500v3.500" stroke="#8e8e8e" stroke-width=".8"/></svg>
<div class="b" style="left:767px;top:139px;width:261px;height:457px;border:2px solid #c00000;"></div>
<div class="b" style="left:977px;top:141px;width:22px;height:22px;background:#c00000;"></div>
<span class="t" style="left:983.58px;top:140.5px;font-size:16.5px;line-height:20px;color:#fff;font-weight:700;font-family:'Liberation Serif',serif;-webkit-text-stroke:.45px #fff;transform:scaleX(1.14);transform-origin:50% 50%;">5</span>
<div class="b" style="left:1033px;top:140px;width:1px;height:460px;background:#505050;"></div>
<div class="b" style="left:1034px;top:140px;width:1px;height:460px;background:#fff;"></div>
<div class="b" style="left:1037px;top:142px;width:248px;height:456px;background:#fff;"></div>
<div class="b" style="left:1037px;top:142px;width:248px;height:26px;background:#4189e6;"></div>
<div class="b" style="left:1037px;top:168px;width:248px;height:1px;background:#c9d6ea;"></div>
<span class="t" style="left:1038.00px;top:147px;font-size:12px;line-height:15px;color:#fff;letter-spacing:0.097px;">Workflow Item History</span>
<svg class="b" style="left:1267px;top:150px" width="7" height="9" viewBox="0 0 7 9"><g fill="#fff" shape-rendering="crispEdges"><rect x="1" y="0" width="5" height="1"/><rect x="1" y="0" width="1" height="5"/><rect x="4" y="0" width="2" height="5"/><rect x="0" y="5" width="7" height="1"/><rect x="3" y="6" width="1" height="3"/></g></svg>
<div class="b" style="left:1037px;top:173px;width:232px;height:15px;background:#abd5ab;"></div>
<span class="t" style="left:1131.35px;top:174px;font-size:11.5px;line-height:14px;color:#111;letter-spacing:-0.048px;">Approve</span>
<div class="b" style="left:1037px;top:188px;width:99px;height:17px;background:#e0e0e0;"></div>
<div class="b" style="left:1037px;top:205px;width:232px;height:0px;border-top:1px dotted #9a9a9a;"></div>
<span class="t" style="left:1038.00px;top:190px;font-size:11.5px;line-height:14px;color:#111;letter-spacing:-0.123px;">Previous Step</span>
<span class="t" style="left:1137.50px;top:190px;font-size:11.5px;line-height:14px;color:#111;letter-spacing:-0.111px;">Rejected</span>
<div class="b" style="left:1037px;top:206px;width:99px;height:17px;background:#e0e0e0;"></div>
<div class="b" style="left:1037px;top:223px;width:232px;height:0px;border-top:1px dotted #9a9a9a;"></div>
<span class="t" style="left:1038.00px;top:208px;font-size:11.5px;line-height:14px;color:#111;letter-spacing:-0.170px;">New Step</span>
<span class="t" style="left:1137.50px;top:208px;font-size:11.5px;line-height:14px;color:#111;letter-spacing:-0.203px;">Data_Entry</span>
<div class="b" style="left:1037px;top:224px;width:99px;height:17px;background:#e0e0e0;"></div>
<div class="b" style="left:1037px;top:241px;width:232px;height:0px;border-top:1px dotted #9a9a9a;"></div>
<span class="t" style="left:1038.00px;top:226px;font-size:11.5px;line-height:14px;color:#111;letter-spacing:-0.080px;">Changed By</span>
<span class="t" style="left:1137.50px;top:226px;font-size:11.5px;line-height:14px;color:#111;letter-spacing:-0.087px;">James Smith</span>
<div class="b" style="left:1037px;top:242px;width:99px;height:17px;background:#e0e0e0;"></div>
<div class="b" style="left:1037px;top:259px;width:232px;height:0px;border-top:1px dotted #9a9a9a;"></div>
<span class="t" style="left:1038.00px;top:244px;font-size:11.5px;line-height:14px;color:#111;letter-spacing:-0.022px;">Changed On</span>
<span class="t" style="left:1137.50px;top:244px;font-size:11.5px;line-height:14px;color:#111;">1/21/2014 2:15:13 AM</span>
<div class="b" style="left:1037px;top:260px;width:99px;height:17px;background:#e0e0e0;"></div>
<div class="b" style="left:1037px;top:277px;width:232px;height:0px;border-top:1px dotted #9a9a9a;"></div>
<span class="t" style="left:1038.00px;top:262px;font-size:11.5px;line-height:14px;color:#111;letter-spacing:0.049px;">Previous Owner</span>
<span class="t" style="left:1137.50px;top:262px;font-size:11.5px;line-height:14px;color:#111;letter-spacing:-0.087px;">James Smith</span>
<div class="b" style="left:1037px;top:278px;width:99px;height:17px;background:#e0e0e0;"></div>
<div class="b" style="left:1037px;top:295px;width:232px;height:0px;border-top:1px dotted #9a9a9a;"></div>
<span class="t" style="left:1038.00px;top:280px;font-size:11.5px;line-height:14px;color:#111;letter-spacing:0.161px;">Current Owner</span>
<span class="t" style="left:1137.50px;top:280px;font-size:11.5px;line-height:14px;color:#111;letter-spacing:-0.087px;">James Smith</span>
<div class="b" style="left:1037px;top:296px;width:99px;height:20px;background:#e0e0e0;"></div>
<div class="b" style="left:1037px;top:316px;width:232px;height:0px;border-top:1px dotted #9a9a9a;"></div>
<span class="t" style="left:1038.00px;top:298px;font-size:11.5px;line-height:14px;color:#111;letter-spacing:0.522px;">Comment</span>
<div class="b" style="left:1037px;top:320px;width:232px;height:15px;background:#d8a3a0;"></div>
<span class="t" style="left:1137.60px;top:321px;font-size:11.5px;line-height:14px;color:#111;letter-spacing:-0.433px;">Reject</span>
<div class="b" style="left:1037px;top:335px;width:99px;height:17px;background:#e0e0e0;"></div>
<div class="b" style="left:1037px;top:352px;width:232px;height:0px;border-top:1px dotted #9a9a9a;"></div>
<span class="t" style="left:1038.00px;top:337px;font-size:11.5px;line-height:14px;color:#111;letter-spacing:-0.123px;">Previous Step</span>
<span class="t" style="left:1137.50px;top:337px;font-size:11.5px;line-height:14px;color:#111;letter-spacing:-0.203px;">Data_Entry</span>
<div class="b" style="left:1037px;top:353px;width:99px;height:17px;background:#e0e0e0;"></div>
<div class="b" style="left:1037px;top:370px;width:232px;height:0px;border-top:1px dotted #9a9a9a;"></div>
<span class="t" style="left:1038.00px;top:355px;font-size:11.5px;line-height:14px;color:#111;letter-spacing:-0.170px;">New Step</span>
<span class="t" style="left:1137.50px;top:355px;font-size:11.5px;line-height:14px;color:#111;letter-spacing:-0.111px;">Rejected</span>
<div class="b" style="left:1037px;top:371px;width:99px;height:17px;background:#e0e0e0;"></div>
<div class="b" style="left:1037px;top:388px;width:232px;height:0px;border-top:1px dotted #9a9a9a;"></div>
<span class="t" style="left:1038.00px;top:373px;font-size:11.5px;line-height:14px;color:#111;letter-spacing:-0.080px;">Changed By</span>
<span class="t" style="left:1137.50px;top:373px;font-size:11.5px;line-height:14px;color:#111;letter-spacing:-0.087px;">James Smith</span>
<div class="b" style="left:1037px;top:389px;width:99px;height:17px;background:#e0e0e0;"></div>
<div class="b" style="left:1037px;top:406px;width:232px;height:0px;border-top:1px dotted #9a9a9a;"></div>
<span class="t" style="left:1038.00px;top:391px;font-size:11.5px;line-height:14px;color:#111;letter-spacing:-0.022px;">Changed On</span>
<span class="t" style="left:1137.50px;top:391px;font-size:11.5px;line-height:14px;color:#111;">1/21/2014 2:14:46 AM</span>
<div class="b" style="left:1037px;top:407px;width:99px;height:17px;background:#e0e0e0;"></div>
<div class="b" style="left:1037px;top:424px;width:232px;height:0px;border-top:1px dotted #9a9a9a;"></div>
<span class="t" style="left:1038.00px;top:409px;font-size:11.5px;line-height:14px;color:#111;letter-spacing:0.049px;">Previous Owner</span>
<span class="t" style="left:1137.50px;top:409px;font-size:11.5px;line-height:14px;color:#111;letter-spacing:-0.087px;">James Smith</span>
<div class="b" style="left:1037px;top:425px;width:99px;height:17px;background:#e0e0e0;"></div>
<div class="b" style="left:1037px;top:442px;width:232px;height:0px;border-top:1px dotted #9a9a9a;"></div>
<span class="t" style="left:1038.00px;top:427px;font-size:11.5px;line-height:14px;color:#111;letter-spacing:0.161px;">Current Owner</span>
<span class="t" style="left:1137.50px;top:427px;font-size:11.5px;line-height:14px;color:#111;letter-spacing:-0.087px;">James Smith</span>
<div class="b" style="left:1037px;top:443px;width:99px;height:20px;background:#e0e0e0;"></div>
<div class="b" style="left:1037px;top:463px;width:232px;height:0px;border-top:1px dotted #9a9a9a;"></div>
<span class="t" style="left:1038.00px;top:445px;font-size:11.5px;line-height:14px;color:#111;letter-spacing:0.522px;">Comment</span>
<div class="b" style="left:1271px;top:172px;width:14px;height:426px;background:repeating-conic-gradient(#fff 0 25%,#d6d3ce 0 50%) 0 0/2px 2px;"></div>
<div class="b" style="left:1271px;top:172px;width:12px;height:13px;background:#d6d3ce;border:1px solid;border-color:#fff #404040 #404040 #fff;box-shadow:inset -1px -1px 0 #808080;"></div>
<svg class="b" style="left:1274.5px;top:177.5px" width="7" height="4" viewBox="0 0 7 4"><path d="M0 4h7l-3.500-4z" fill="#8a8a8a"/></svg>
<div class="b" style="left:1271px;top:584px;width:12px;height:12px;background:#d6d3ce;border:1px solid;border-color:#fff #404040 #404040 #fff;box-shadow:inset -1px -1px 0 #808080;"></div>
<svg class="b" style="left:1274.5px;top:589.0px" width="7" height="4" viewBox="0 0 7 4"><path d="M0 0h7l-3.500 4z" fill="#8a8a8a"/></svg>
<div class="b" style="left:1035px;top:140px;width:248px;height:456px;border:2px solid #c00000;"></div>
<div class="b" style="left:1175px;top:142px;width:22px;height:22px;background:#c00000;"></div>
<span class="t" style="left:1181.58px;top:141.5px;font-size:16.5px;line-height:20px;color:#fff;font-weight:700;font-family:'Liberation Serif',serif;-webkit-text-stroke:.45px #fff;transform:scaleX(1.14);transform-origin:50% 50%;">3</span>
<div class="b" style="left:1287px;top:140px;width:1px;height:460px;background:#404040;"></div>
<div class="b" style="left:1288px;top:140px;width:1px;height:460px;background:#fff;"></div>
<div class="b" style="left:1291px;top:142px;width:225px;height:456px;background:#fff;"></div>
<div class="b" style="left:1291px;top:142px;width:225px;height:26px;background:#4189e6;"></div>
<div class="b" style="left:1291px;top:168px;width:225px;height:1px;background:#c9d6ea;"></div>
<span class="t" style="left:1291.80px;top:147px;font-size:12px;line-height:15px;color:#fff;letter-spacing:0.012px;">Document Profile (Ctrl+D)</span>
<svg class="b" style="left:1499px;top:150px" width="7" height="9" viewBox="0 0 7 9"><g fill="#fff" shape-rendering="crispEdges"><rect x="1" y="0" width="5" height="1"/><rect x="1" y="0" width="1" height="5"/><rect x="4" y="0" width="2" height="5"/><rect x="0" y="5" width="7" height="1"/><rect x="3" y="6" width="1" height="3"/></g></svg>
<span class="t" style="left:1291.70px;top:177px;font-size:11.5px;line-height:14px;color:#000;font-weight:700;letter-spacing:-0.024px;">First Name:</span>
<span class="t" style="left:1291.70px;top:296px;font-size:11.5px;line-height:14px;color:#000;font-weight:700;letter-spacing:-0.149px;">Last Name:</span>
<span class="t" style="left:1291.70px;top:361px;font-size:11.5px;line-height:14px;color:#000;font-weight:700;letter-spacing:0.276px;">Workflow User:</span>
<span class="t" style="left:1291.70px;top:426px;font-size:11.5px;line-height:14px;color:#000;font-weight:700;letter-spacing:0.149px;">Date:</span>
<span class="t" style="left:1291.70px;top:485px;font-size:11.5px;line-height:14px;color:#000;font-weight:700;letter-spacing:-0.084px;">Comments:</span>
<svg class="b" style="left:1291.5px;top:205px" width="12" height="12" viewBox="0 0 12 12"><defs><radialGradient id="rg211" cx=".4" cy=".35" r=".7"><stop offset="0" stop-color="#9ad4f5"/><stop offset=".5" stop-color="#2a8ad8"/><stop offset="1" stop-color="#0c3f86"/></radialGradient><linearGradient id="rb211" x1="0" y1="0" x2="1" y2="1"><stop offset="0" stop-color="#c9c9c9"/><stop offset="1" stop-color="#fbfbfb"/></linearGradient></defs><circle cx="6" cy="6" r="5.400" fill="url(#rb211)" stroke="#8e8f8f" stroke-width="1"/><circle cx="6" cy="6" r="3" fill="url(#rg211)" stroke="#193b66" stroke-width=".6"/></svg>
<span class="t" style="left:1305.60px;top:204.5px;font-size:11px;line-height:14px;color:#000;letter-spacing:-0.028px;">Simpson</span>
<svg class="b" style="left:1291.5px;top:225px" width="12" height="12" viewBox="0 0 12 12"><defs><radialGradient id="rg231" cx=".4" cy=".35" r=".7"><stop offset="0" stop-color="#9ad4f5"/><stop offset=".5" stop-color="#2a8ad8"/><stop offset="1" stop-color="#0c3f86"/></radialGradient><linearGradient id="rb231" x1="0" y1="0" x2="1" y2="1"><stop offset="0" stop-color="#c9c9c9"/><stop offset="1" stop-color="#fbfbfb"/></linearGradient></defs><circle cx="6" cy="6" r="5.400" fill="url(#rb231)" stroke="#8e8f8f" stroke-width="1"/></svg>
<span class="t" style="left:1305.60px;top:224.5px;font-size:11px;line-height:14px;color:#000;letter-spacing:0.079px;">Marry</span>
<svg class="b" style="left:1291.5px;top:245px" width="12" height="12" viewBox="0 0 12 12"><defs><radialGradient id="rg251" cx=".4" cy=".35" r=".7"><stop offset="0" stop-color="#9ad4f5"/><stop offset=".5" stop-color="#2a8ad8"/><stop offset="1" stop-color="#0c3f86"/></radialGradient><linearGradient id="rb251" x1="0" y1="0" x2="1" y2="1"><stop offset="0" stop-color="#c9c9c9"/><stop offset="1" stop-color="#fbfbfb"/></linearGradient></defs><circle cx="6" cy="6" r="5.400" fill="url(#rb251)" stroke="#8e8f8f" stroke-width="1"/></svg>
<span class="t" style="left:1305.60px;top:244.5px;font-size:11px;line-height:14px;color:#000;letter-spacing:0.099px;">Maria</span>
<div class="b" style="left:1291px;top:318px;width:184px;height:19px;background:#fefcff;border:1px solid #b4b9d6;"></div>
<div class="b" style="left:1460px;top:319px;width:16px;height:19px;background:#d6d3ce;"></div>
<svg class="b" style="left:1464.5px;top:326.5px" width="8" height="5" viewBox="0 0 8 5"><path d="M0 0h7l-3.500 4z" fill="#000"/></svg>
<span class="t" style="left:1295.00px;top:322.0px;font-size:11px;line-height:14px;color:#000;letter-spacing:-0.206px;">Thomas</span>
<div class="b" style="left:1291px;top:383px;width:184px;height:19px;background:#fefcff;border:1px solid #b4b9d6;"></div>
<div class="b" style="left:1460px;top:384px;width:16px;height:19px;background:#d6d3ce;"></div>
<svg class="b" style="left:1464.5px;top:391.5px" width="8" height="5" viewBox="0 0 8 5"><path d="M0 0h7l-3.500 4z" fill="#000"/></svg>
<div class="b" style="left:1291px;top:445px;width:184px;height:20px;background:#fefcff;border:1px solid #b4b9d6;"></div>
<div class="b" style="left:1460px;top:446px;width:16px;height:20px;background:#d6d3ce;"></div>
<svg class="b" style="left:1464.5px;top:454.0px" width="8" height="5" viewBox="0 0 8 5"><path d="M0 0h7l-3.500 4z" fill="#000"/></svg>
<span class="t" style="left:1295.00px;top:449.5px;font-size:11px;line-height:14px;color:#000;letter-spacing:-0.005px;">12/18/2013</span>
<div class="b" style="left:1291px;top:507px;width:184px;height:91px;background:#fff;border:1px solid #b4b9d6;border-bottom:none;"></div>
<div class="b" style="left:1503px;top:171px;width:13px;height:427px;background:repeating-conic-gradient(#fff 0 25%,#d6d3ce 0 50%) 0 0/2px 2px;"></div>
<div class="b" style="left:1503px;top:171px;width:11px;height:13px;background:#d6d3ce;border:1px solid;border-color:#fff #404040 #404040 #fff;box-shadow:inset -1px -1px 0 #808080;"></div>
<svg class="b" style="left:1506.0px;top:176.5px" width="7" height="4" viewBox="0 0 7 4"><path d="M0 4h7l-3.500-4z" fill="#000"/></svg>
<div class="b" style="left:1503px;top:187px;width:11px;height:382px;background:#d6d3ce;border:1px solid;border-color:#fff #404040 #404040 #fff;box-shadow:inset -1px -1px 0 #808080;"></div>
<div class="b" style="left:1503px;top:582px;width:11px;height:14px;background:#d6d3ce;border:1px solid;border-color:#fff #404040 #404040 #fff;box-shadow:inset -1px -1px 0 #808080;"></div>
<svg class="b" style="left:1506.0px;top:588.0px" width="7" height="4" viewBox="0 0 7 4"><path d="M0 0h7l-3.500 4z" fill="#000"/></svg>
<div class="b" style="left:1289px;top:140px;width:225px;height:456px;border:2px solid #c00000;"></div>
<div class="b" style="left:1452px;top:142px;width:22px;height:22px;background:#c00000;"></div>
<span class="t" style="left:1458.58px;top:141.5px;font-size:16.5px;line-height:20px;color:#fff;font-weight:700;font-family:'Liberation Serif',serif;-webkit-text-stroke:.45px #fff;transform:scaleX(1.14);transform-origin:50% 50%;">2</span>
<div class="b" style="left:263px;top:142px;width:364px;height:456px;background:#fff;border-left:1px dotted #aaa;border-right:1px solid #666;width:362px;"></div>
<span class="t" style="left:282.00px;top:169.5px;font-size:16px;line-height:26px;color:#111;font-weight:700;letter-spacing:-0.450px;transform:scaleX(0.7320);transform-origin:0 0;">FUJITSU</span>
<svg class="b" style="left:296.5px;top:168.5px" width="10" height="6" viewBox="0 0 10 6"><path d="M5 3C3.800 1 1 .8 1 3s2.800 2 4 0c1.200-2 4-2.200 4 0s-2.800 2-4 0z" fill="none" stroke="#111" stroke-width="1"/></svg>
<span class="t" style="left:342.00px;top:165.9px;font-size:4.8px;line-height:7px;color:#000;font-family:'Liberation Serif',serif;letter-spacing:0.225px;-webkit-text-stroke:.15px #000;">FUJITSU COMPUTER PRODUCTS OF AMERICA, INC.</span>
<span class="t" style="left:342.00px;top:172px;font-size:4.8px;line-height:7px;color:#000;font-family:'Liberation Serif',serif;letter-spacing:0.214px;-webkit-text-stroke:.15px #000;">0000 E. ARQUES AVE, SUNNYVALE, CA 94000-0000</span>
<span class="t" style="left:342.00px;top:178.2px;font-size:4.8px;line-height:7px;color:#000;font-family:'Liberation Serif',serif;letter-spacing:0.165px;-webkit-text-stroke:.15px #000;">Phone: (408) 555-1212</span>
<span class="t" style="left:540.40px;top:172px;font-size:15.5px;line-height:18px;color:#111;font-weight:700;letter-spacing:-0.676px;">INVOICE</span>
<span class="t" style="left:358.70px;top:192px;font-size:4.8px;line-height:7px;color:#000;font-family:'Liberation Serif',serif;letter-spacing:0.211px;-webkit-text-stroke:.15px #000;">REMIT TO:</span>
<span class="t" style="left:394.00px;top:192.3px;font-size:5.1px;line-height:7px;color:#1a1a1a;font-weight:700;font-family:'Liberation Mono',monospace;letter-spacing:0.010px;">Fujitsu Computer Products of America</span>
<span class="t" style="left:394.00px;top:199.2px;font-size:5.1px;line-height:7px;color:#1a1a1a;font-weight:700;font-family:'Liberation Mono',monospace;letter-spacing:0.010px;">c/o Bank of America</span>
<span class="t" style="left:394.00px;top:206.0px;font-size:5.1px;line-height:7px;color:#1a1a1a;font-weight:700;font-family:'Liberation Mono',monospace;letter-spacing:0.010px;">P.O. Box 000000</span>
<span class="t" style="left:394.00px;top:213.0px;font-size:5.1px;line-height:7px;color:#1a1a1a;font-weight:700;font-family:'Liberation Mono',monospace;letter-spacing:0.010px;">SOMEWHERE CA 00000-0000 US</span>
<span class="t" style="left:539.20px;top:192.3px;font-size:5.1px;line-height:7px;color:#1a1a1a;font-weight:700;font-family:'Liberation Mono',monospace;letter-spacing:0.010px;">INVOICE NO. 12345678</span>
<span class="t" style="left:539.20px;top:199.2px;font-size:5.1px;line-height:7px;color:#1a1a1a;font-weight:700;font-family:'Liberation Mono',monospace;letter-spacing:0.010px;">INVOICE DATE 01-MAR-07</span>
<span class="t" style="left:539.20px;top:206.0px;font-size:5.1px;line-height:7px;color:#1a1a1a;font-weight:700;font-family:'Liberation Mono',monospace;letter-spacing:0.010px;">CUSTOMER NO. 00000</span>
<span class="t" style="left:308.60px;top:226.5px;font-size:4.8px;line-height:7px;color:#000;font-family:'Liberation Serif',serif;letter-spacing:0.157px;-webkit-text-stroke:.15px #000;">BILL TO:</span>
<span class="t" style="left:475.90px;top:226.5px;font-size:4.8px;line-height:7px;color:#000;font-family:'Liberation Serif',serif;letter-spacing:0.189px;-webkit-text-stroke:.15px #000;">SHIP TO:</span>
<span class="t" style="left:308.60px;top:233.6px;font-size:5.1px;line-height:7px;color:#1a1a1a;font-weight:700;font-family:'Liberation Mono',monospace;letter-spacing:0.010px;">GENERAL HOSPITAL</span>
<span class="t" style="left:308.60px;top:240.7px;font-size:5.1px;line-height:7px;color:#1a1a1a;font-weight:700;font-family:'Liberation Mono',monospace;letter-spacing:0.010px;">12345 EVERCURE LANE</span>
<span class="t" style="left:308.60px;top:247.5px;font-size:5.1px;line-height:7px;color:#1a1a1a;font-weight:700;font-family:'Liberation Mono',monospace;letter-spacing:0.010px;">STE A-5</span>
<span class="t" style="left:475.90px;top:233.6px;font-size:5.1px;line-height:7px;color:#1a1a1a;font-weight:700;font-family:'Liberation Mono',monospace;letter-spacing:0.010px;">GENERAL HOSPITAL</span>
<span class="t" style="left:475.90px;top:240.7px;font-size:5.1px;line-height:7px;color:#1a1a1a;font-weight:700;font-family:'Liberation Mono',monospace;letter-spacing:0.010px;">12345 EVERCURE LANE</span>
<span class="t" style="left:475.90px;top:247.5px;font-size:5.1px;line-height:7px;color:#1a1a1a;font-weight:700;font-family:'Liberation Mono',monospace;letter-spacing:0.010px;">STE A-5</span>
<span class="t" style="left:308.60px;top:268.3px;font-size:5.1px;line-height:7px;color:#1a1a1a;font-weight:700;font-family:'Liberation Mono',monospace;letter-spacing:0.010px;">ANYWHERE AL 00000</span>
<span class="t" style="left:308.60px;top:275.1px;font-size:5.1px;line-height:7px;color:#1a1a1a;font-weight:700;font-family:'Liberation Mono',monospace;letter-spacing:0.010px;">US</span>
<span class="t" style="left:475.90px;top:268.3px;font-size:5.1px;line-height:7px;color:#1a1a1a;font-weight:700;font-family:'Liberation Mono',monospace;letter-spacing:0.010px;">ANYWHERE</span>
<span class="t" style="left:475.90px;top:275.1px;font-size:5.1px;line-height:7px;color:#1a1a1a;font-weight:700;font-family:'Liberation Mono',monospace;letter-spacing:0.010px;">AL 00000 US</span>
<svg class="b" style="left:0px;top:0px" width="1" height="1" viewBox="0 0 1 1"><path d="M281.2 290.500H610M281.2 301.300H610M281.2 311.800H610M281.2 290.200V312M311.3 290.200V312M375.2 290.200V312M423.5 290.200V312M490.3 290.200V312M533.9 290.200V312M610 290.200V312" stroke="#222" stroke-width=".75" fill="none"/></svg>
<span class="t" style="left:289.12px;top:293.1px;font-size:4.7px;line-height:7px;color:#1a1a1a;font-weight:700;font-family:'Liberation Mono',monospace;letter-spacing:0.030px;">TERMS</span>
<span class="t" style="left:291.98px;top:303.9px;font-size:4.7px;line-height:7px;color:#1a1a1a;font-weight:700;font-family:'Liberation Mono',monospace;letter-spacing:0.030px;">N30</span>
<span class="t" style="left:330.43px;top:293.1px;font-size:4.7px;line-height:7px;color:#1a1a1a;font-weight:700;font-family:'Liberation Mono',monospace;letter-spacing:0.030px;">PO NUMBER</span>
<span class="t" style="left:336.12px;top:303.9px;font-size:4.7px;line-height:7px;color:#1a1a1a;font-weight:700;font-family:'Liberation Mono',monospace;letter-spacing:0.030px;">00000</span>
<span class="t" style="left:383.68px;top:293.1px;font-size:4.7px;line-height:7px;color:#1a1a1a;font-weight:700;font-family:'Liberation Mono',monospace;letter-spacing:0.030px;">SALES ORDER</span>
<span class="t" style="left:387.95px;top:303.9px;font-size:4.7px;line-height:7px;color:#1a1a1a;font-weight:700;font-family:'Liberation Mono',monospace;letter-spacing:0.030px;">00000000</span>
<span class="t" style="left:431.25px;top:293.1px;font-size:4.7px;line-height:7px;color:#1a1a1a;font-weight:700;font-family:'Liberation Mono',monospace;letter-spacing:0.030px;">METHOD OF SHIPMENT</span>
<span class="t" style="left:495.00px;top:293.1px;font-size:4.7px;line-height:7px;color:#1a1a1a;font-weight:700;font-family:'Liberation Mono',monospace;letter-spacing:0.030px;">DATE SHIPPED</span>
<span class="t" style="left:552.00px;top:293.1px;font-size:4.7px;line-height:7px;color:#1a1a1a;font-weight:700;font-family:'Liberation Mono',monospace;letter-spacing:0.030px;">BILL OF LADING</span>
<span class="t" style="left:570.54px;top:303.9px;font-size:4.7px;line-height:7px;color:#1a1a1a;font-weight:700;font-family:'Liberation Mono',monospace;">0</span>
<span class="t" style="left:286.00px;top:323.2px;font-size:5.1px;line-height:7px;color:#1a1a1a;font-weight:700;font-family:'Liberation Mono',monospace;letter-spacing:0.010px;">Contract Number   :00000</span>
<span class="t" style="left:286.00px;top:331.4px;font-size:5.1px;line-height:7px;color:#1a1a1a;font-weight:700;font-family:'Liberation Mono',monospace;letter-spacing:0.010px;">Contact Person    :JON MIWA    Phone:415-555-1212</span>
<svg class="b" style="left:0px;top:0px" width="1" height="1" viewBox="0 0 1 1"><path d="M281.2 338.400H610M281.2 352.800H610M281.2 412.700H610M281.2 338.200V413M294.5 338.200V413M444.7 338.200V413M471.2 338.200V413M489.5 338.200V413M533.9 338.200V413M596.7 338.200V413M610 338.200V413" stroke="#222" stroke-width=".8" fill="none"/></svg>
<span class="t" style="left:282.15px;top:343.5px;font-size:4.7px;line-height:7px;color:#1a1a1a;font-weight:700;font-family:'Liberation Mono',monospace;letter-spacing:0.030px;">LINE</span>
<span class="t" style="left:332.55px;top:343.5px;font-size:4.7px;line-height:7px;color:#1a1a1a;font-weight:700;font-family:'Liberation Mono',monospace;letter-spacing:0.030px;">PRODUCT NUMBER/DESCRIPTION</span>
<span class="t" style="left:453.68px;top:343.5px;font-size:4.7px;line-height:7px;color:#1a1a1a;font-weight:700;font-family:'Liberation Mono',monospace;letter-spacing:0.030px;">QTY</span>
<span class="t" style="left:476.08px;top:343.5px;font-size:4.7px;line-height:7px;color:#1a1a1a;font-weight:700;font-family:'Liberation Mono',monospace;letter-spacing:0.030px;">UOM</span>
<span class="t" style="left:497.45px;top:343.5px;font-size:4.7px;line-height:7px;color:#1a1a1a;font-weight:700;font-family:'Liberation Mono',monospace;letter-spacing:0.030px;">UNIT PRICE</span>
<span class="t" style="left:556.75px;top:343.5px;font-size:4.7px;line-height:7px;color:#1a1a1a;font-weight:700;font-family:'Liberation Mono',monospace;letter-spacing:0.030px;">AMOUNT</span>
<span class="t" style="left:599.08px;top:343.5px;font-size:4.7px;line-height:7px;color:#1a1a1a;font-weight:700;font-family:'Liberation Mono',monospace;letter-spacing:0.030px;">TAX</span>
<span class="t" style="left:283.00px;top:355.6px;font-size:5.1px;line-height:7px;color:#1a1a1a;font-weight:700;font-family:'Liberation Mono',monospace;">1</span>
<span class="t" style="left:296.00px;top:355.6px;font-size:5.1px;line-height:7px;color:#1a1a1a;font-weight:700;font-family:'Liberation Mono',monospace;letter-spacing:0.010px;">CG00000-000000-A DEPARTMENTAL SCANCARE PLUS</span>
<span class="t" style="left:296.00px;top:362.5px;font-size:5.1px;line-height:7px;color:#1a1a1a;font-weight:700;font-family:'Liberation Mono',monospace;letter-spacing:0.010px;">POST WARRANTY, NBD, 1PM CONSUMABLES, TRAINING,</span>
<span class="t" style="left:296.00px;top:369.6px;font-size:5.1px;line-height:7px;color:#1a1a1a;font-weight:700;font-family:'Liberation Mono',monospace;letter-spacing:0.010px;">Service Start Date :23-MAR-07</span>
<span class="t" style="left:296.00px;top:376.5px;font-size:5.1px;line-height:7px;color:#1a1a1a;font-weight:700;font-family:'Liberation Mono',monospace;letter-spacing:0.010px;">Service  End  Date :23-MAR-08</span>
<span class="t" style="left:296.00px;top:382.9px;font-size:5.1px;line-height:7px;color:#1a1a1a;font-weight:700;font-family:'Liberation Mono',monospace;letter-spacing:0.010px;">Service duration (in Years) : 1.00</span>
<span class="t" style="left:296.00px;top:390.0px;font-size:5.1px;line-height:7px;color:#1a1a1a;font-weight:700;font-family:'Liberation Mono',monospace;letter-spacing:0.010px;">Model:FI-4340C</span>
<span class="t" style="left:296.00px;top:397.0px;font-size:5.1px;line-height:7px;color:#1a1a1a;font-weight:700;font-family:'Liberation Mono',monospace;letter-spacing:0.010px;">Serial Number:0000</span>
<span class="t" style="left:461.64px;top:355.6px;font-size:5.1px;line-height:7px;color:#1a1a1a;font-weight:700;font-family:'Liberation Mono',monospace;">1</span>
<span class="t" style="left:476.50px;top:355.6px;font-size:5.1px;line-height:7px;color:#1a1a1a;font-weight:700;font-family:'Liberation Mono',monospace;letter-spacing:0.010px;">YR</span>
<span class="t" style="left:510.11px;top:355.6px;font-size:5.1px;line-height:7px;color:#1a1a1a;font-weight:700;font-family:'Liberation Mono',monospace;letter-spacing:0.010px;">1395.00</span>
<span class="t" style="left:570.44px;top:355.6px;font-size:5.1px;line-height:7px;color:#1a1a1a;font-weight:700;font-family:'Liberation Mono',monospace;letter-spacing:0.010px;">1,395.00</span>
<span class="t" style="left:601.00px;top:355.6px;font-size:5.1px;line-height:7px;color:#1a1a1a;font-weight:700;font-family:'Liberation Mono',monospace;">N</span>
<span class="t" style="left:478.37px;top:419.4px;font-size:5.1px;line-height:7px;color:#1a1a1a;font-weight:700;font-family:'Liberation Mono',monospace;letter-spacing:0.010px;">Subtotal:</span>
<span class="t" style="left:481.44px;top:426.5px;font-size:5.1px;line-height:7px;color:#1a1a1a;font-weight:700;font-family:'Liberation Mono',monospace;letter-spacing:0.010px;">Freight:</span>
<span class="t" style="left:493.72px;top:433.3px;font-size:5.1px;line-height:7px;color:#1a1a1a;font-weight:700;font-family:'Liberation Mono',monospace;letter-spacing:0.010px;">Tax:</span>
<span class="t" style="left:472.23px;top:440.2px;font-size:5.1px;line-height:7px;color:#1a1a1a;font-weight:700;font-family:'Liberation Mono',monospace;letter-spacing:0.010px;">(   .00%  )</span>
<span class="t" style="left:487.58px;top:447.1px;font-size:5.1px;line-height:7px;color:#1a1a1a;font-weight:700;font-family:'Liberation Mono',monospace;letter-spacing:0.010px;">Total:</span>
<svg class="b" style="left:0px;top:0px" width="1" height="1" viewBox="0 0 1 1"><path d="M516.300 416.600H596.700V457.800H516.300zM516.300 444.300H596.700" stroke="#222" stroke-width=".8" fill="none"/></svg>
<span class="t" style="left:566.44px;top:419.4px;font-size:5.1px;line-height:7px;color:#1a1a1a;font-weight:700;font-family:'Liberation Mono',monospace;letter-spacing:0.010px;">1,395.00</span>
<span class="t" style="left:581.79px;top:426.5px;font-size:5.1px;line-height:7px;color:#1a1a1a;font-weight:700;font-family:'Liberation Mono',monospace;letter-spacing:0.010px;">.00</span>
<span class="t" style="left:581.79px;top:433.3px;font-size:5.1px;line-height:7px;color:#1a1a1a;font-weight:700;font-family:'Liberation Mono',monospace;letter-spacing:0.010px;">.00</span>
<span class="t" style="left:566.44px;top:447.1px;font-size:5.1px;line-height:7px;color:#1a1a1a;font-weight:700;font-family:'Liberation Mono',monospace;letter-spacing:0.010px;">1,395.00</span>
<span class="t" style="left:355.70px;top:550.8px;font-size:4.6px;line-height:7px;color:#000;font-family:'Liberation Serif',serif;letter-spacing:0.232px;-webkit-text-stroke:.15px #000;">For any questions regarding this invoice, please email fcpaxxxxxxxxx@xx.fujitsu.com</span>
<span class="t" style="left:417.90px;top:562.9px;font-size:4.6px;line-height:7px;color:#000;font-family:'Liberation Serif',serif;letter-spacing:0.265px;-webkit-text-stroke:.15px #000;">Page</span>
<span class="t" style="left:437.00px;top:562.9px;font-size:4.6px;line-height:7px;color:#000;font-family:'Liberation Serif',serif;-webkit-text-stroke:.15px #000;">1</span>
<span class="t" style="left:457.50px;top:562.9px;font-size:4.6px;line-height:7px;color:#000;font-family:'Liberation Serif',serif;letter-spacing:0.334px;-webkit-text-stroke:.15px #000;">of</span>
<span class="t" style="left:470.50px;top:562.9px;font-size:4.6px;line-height:7px;color:#000;font-family:'Liberation Serif',serif;-webkit-text-stroke:.15px #000;">1</span>
<span class="t" style="left:282.00px;top:587px;font-size:3.5px;line-height:5px;color:#222;font-weight:700;letter-spacing:0.254px;">EDI08</span>
<div class="b" style="left:190px;top:140px;width:528px;height:456px;border:2px solid #c00000;"></div>
<div class="b" style="left:208px;top:142px;width:22px;height:22px;background:#c00000;"></div>
<span class="t" style="left:214.57px;top:141.5px;font-size:16.5px;line-height:20px;color:#fff;font-weight:700;font-family:'Liberation Serif',serif;-webkit-text-stroke:.45px #fff;transform:scaleX(1.14);transform-origin:50% 50%;">4</span>
<div class="b" style="left:3px;top:600px;width:1516px;height:1px;background:#cfcfcf;"></div>
<div class="b" style="left:3px;top:601px;width:1516px;height:18px;background:#4189e6;"></div>
<span class="t" style="left:6.00px;top:603px;font-size:11px;line-height:14px;color:#fff;font-weight:700;letter-spacing:0.570px;">Workflow Items (Ctrl+Q)</span>
<svg class="b" style="left:1503.5px;top:606px" width="7" height="9" viewBox="0 0 7 9"><g fill="#fff" shape-rendering="crispEdges"><rect x="1" y="0" width="5" height="1"/><rect x="1" y="0" width="1" height="5"/><rect x="4" y="0" width="2" height="5"/><rect x="0" y="5" width="7" height="1"/><rect x="3" y="6" width="1" height="3"/></g></svg>
<div class="b" style="left:4px;top:621px;width:1512px;height:128px;background:#fff;"></div>
<div class="b" style="left:4px;top:623px;width:1310px;height:27px;background:#f6f6f6;border-bottom:1px solid #dedede;"></div>
<div class="b" style="left:77px;top:623px;width:2px;height:28px;background:#e2e2e2;"></div>
<div class="b" style="left:127px;top:623px;width:2px;height:28px;background:#e2e2e2;"></div>
<div class="b" style="left:327px;top:623px;width:2px;height:28px;background:#e2e2e2;"></div>
<div class="b" style="left:397px;top:623px;width:2px;height:28px;background:#e2e2e2;"></div>
<div class="b" style="left:513px;top:623px;width:2px;height:28px;background:#e2e2e2;"></div>
<div class="b" style="left:638px;top:623px;width:2px;height:28px;background:#e2e2e2;"></div>
<div class="b" style="left:742px;top:623px;width:2px;height:28px;background:#e2e2e2;"></div>
<div class="b" style="left:846px;top:623px;width:2px;height:28px;background:#e2e2e2;"></div>
<div class="b" style="left:944px;top:623px;width:2px;height:28px;background:#e2e2e2;"></div>
<div class="b" style="left:1042px;top:623px;width:2px;height:28px;background:#e2e2e2;"></div>
<div class="b" style="left:1146px;top:623px;width:2px;height:28px;background:#e2e2e2;"></div>
<div class="b" style="left:1215px;top:623px;width:2px;height:28px;background:#e2e2e2;"></div>
<div class="b" style="left:1313px;top:623px;width:2px;height:28px;background:#e2e2e2;"></div>
<span class="t" style="left:97.75px;top:629px;font-size:11.5px;line-height:14px;color:#3f86e0;letter-spacing:-0.500px;">ID</span>
<span class="t" style="left:202.50px;top:629px;font-size:11.5px;line-height:14px;color:#3f86e0;letter-spacing:-0.156px;">File Name</span>
<span class="t" style="left:335.25px;top:629px;font-size:11.5px;line-height:14px;color:#3f86e0;letter-spacing:0.027px;">CreatedOn</span>
<span class="t" style="left:410.00px;top:629px;font-size:11.5px;line-height:14px;color:#3f86e0;letter-spacing:0.214px;">Transaction Type</span>
<span class="t" style="left:534.00px;top:629px;font-size:11.5px;line-height:14px;color:#3f86e0;letter-spacing:0.359px;">Document Type</span>
<span class="t" style="left:652.00px;top:629px;font-size:11.5px;line-height:14px;color:#3f86e0;letter-spacing:0.237px;">Workflow Step</span>
<span class="t" style="left:756.25px;top:629px;font-size:11.5px;line-height:14px;color:#3f86e0;letter-spacing:0.237px;">Current Owner</span>
<span class="t" style="left:867.75px;top:629px;font-size:11.5px;line-height:14px;color:#3f86e0;letter-spacing:0.027px;">First Name</span>
<span class="t" style="left:966.00px;top:629px;font-size:11.5px;line-height:14px;color:#3f86e0;letter-spacing:-0.068px;">Last Name</span>
<span class="t" style="left:1055.50px;top:629px;font-size:11.5px;line-height:14px;color:#3f86e0;letter-spacing:0.266px;">Workflow User</span>
<span class="t" style="left:1169.75px;top:629px;font-size:11.5px;line-height:14px;color:#3f86e0;letter-spacing:-0.198px;">Date</span>
<span class="t" style="left:1236.00px;top:629px;font-size:11.5px;line-height:14px;color:#3f86e0;letter-spacing:0.425px;">Comments</span>
<div class="b" style="left:35px;top:631px;width:9px;height:9px;background:#fff;border:1px solid #8a8a8a;"></div>
<span class="t" style="left:10.88px;top:655px;font-size:10.5px;line-height:16px;color:#7a7a7a;font-family:'DejaVu Sans',sans-serif;">*</span>
<div class="b" style="left:22px;top:651px;width:1px;height:20px;background:#8a8a8a;"></div>
<span class="t" style="left:84.88px;top:655px;font-size:10.5px;line-height:16px;color:#1f1f5a;font-family:'DejaVu Sans',sans-serif;">*</span>
<div class="b" style="left:96px;top:651px;width:1px;height:20px;background:#8a8a8a;"></div>
<div class="b" style="left:77px;top:651px;width:1px;height:20px;background:#8a8a8a;"></div>
<span class="t" style="left:134.88px;top:655px;font-size:10.5px;line-height:16px;color:#1f1f5a;font-family:'DejaVu Sans',sans-serif;">*</span>
<div class="b" style="left:146px;top:651px;width:1px;height:20px;background:#8a8a8a;"></div>
<div class="b" style="left:127px;top:651px;width:1px;height:20px;background:#8a8a8a;"></div>
<span class="t" style="left:334.88px;top:655px;font-size:10.5px;line-height:16px;color:#1f1f5a;font-family:'DejaVu Sans',sans-serif;">*</span>
<div class="b" style="left:346px;top:651px;width:1px;height:20px;background:#8a8a8a;"></div>
<div class="b" style="left:327px;top:651px;width:1px;height:20px;background:#8a8a8a;"></div>
<span class="t" style="left:404.88px;top:655px;font-size:10.5px;line-height:16px;color:#1f1f5a;font-family:'DejaVu Sans',sans-serif;">*</span>
<div class="b" style="left:416px;top:651px;width:1px;height:20px;background:#8a8a8a;"></div>
<div class="b" style="left:397px;top:651px;width:1px;height:20px;background:#8a8a8a;"></div>
<span class="t" style="left:520.88px;top:655px;font-size:10.5px;line-height:16px;color:#1f1f5a;font-family:'DejaVu Sans',sans-serif;">*</span>
<div class="b" style="left:532px;top:651px;width:1px;height:20px;background:#8a8a8a;"></div>
<div class="b" style="left:513px;top:651px;width:1px;height:20px;background:#8a8a8a;"></div>
<span class="t" style="left:645.88px;top:655px;font-size:10.5px;line-height:16px;color:#1f1f5a;font-family:'DejaVu Sans',sans-serif;">*</span>
<div class="b" style="left:657px;top:651px;width:1px;height:20px;background:#8a8a8a;"></div>
<div class="b" style="left:638px;top:651px;width:1px;height:20px;background:#8a8a8a;"></div>
<span class="t" style="left:749.88px;top:655px;font-size:10.5px;line-height:16px;color:#1f1f5a;font-family:'DejaVu Sans',sans-serif;">*</span>
<div class="b" style="left:761px;top:651px;width:1px;height:20px;background:#8a8a8a;"></div>
<div class="b" style="left:742px;top:651px;width:1px;height:20px;background:#8a8a8a;"></div>
<span class="t" style="left:853.88px;top:655px;font-size:10.5px;line-height:16px;color:#1f1f5a;font-family:'DejaVu Sans',sans-serif;">*</span>
<div class="b" style="left:865px;top:651px;width:1px;height:20px;background:#8a8a8a;"></div>
<div class="b" style="left:846px;top:651px;width:1px;height:20px;background:#8a8a8a;"></div>
<span class="t" style="left:951.88px;top:655px;font-size:10.5px;line-height:16px;color:#1f1f5a;font-family:'DejaVu Sans',sans-serif;">*</span>
<div class="b" style="left:963px;top:651px;width:1px;height:20px;background:#8a8a8a;"></div>
<div class="b" style="left:944px;top:651px;width:1px;height:20px;background:#8a8a8a;"></div>
<span class="t" style="left:1049.88px;top:655px;font-size:10.5px;line-height:16px;color:#1f1f5a;font-family:'DejaVu Sans',sans-serif;">*</span>
<div class="b" style="left:1061px;top:651px;width:1px;height:20px;background:#8a8a8a;"></div>
<div class="b" style="left:1042px;top:651px;width:1px;height:20px;background:#8a8a8a;"></div>
<span class="t" style="left:1153.88px;top:655px;font-size:10.5px;line-height:16px;color:#1f1f5a;font-family:'DejaVu Sans',sans-serif;">*</span>
<div class="b" style="left:1165px;top:651px;width:1px;height:20px;background:#8a8a8a;"></div>
<div class="b" style="left:1146px;top:651px;width:1px;height:20px;background:#8a8a8a;"></div>
<span class="t" style="left:1222.88px;top:655px;font-size:10.5px;line-height:16px;color:#1f1f5a;font-family:'DejaVu Sans',sans-serif;">*</span>
<div class="b" style="left:1234px;top:651px;width:1px;height:20px;background:#8a8a8a;"></div>
<div class="b" style="left:1215px;top:651px;width:1px;height:20px;background:#8a8a8a;"></div>
<div class="b" style="left:1313px;top:651px;width:1px;height:20px;background:#8a8a8a;"></div>
<div class="b" style="left:4px;top:671px;width:1309px;height:20px;background:#fff;border:1px dotted #000;width:1309px;height:19px;outline:1px solid rgba(70,140,230,.55);outline-offset:-2px;"></div>
<div class="b" style="left:77px;top:672px;width:1px;height:19px;background:#4a8be0;"></div>
<div class="b" style="left:127px;top:672px;width:1px;height:19px;background:#4a8be0;"></div>
<div class="b" style="left:327px;top:672px;width:1px;height:19px;background:#4a8be0;"></div>
<div class="b" style="left:397px;top:672px;width:1px;height:19px;background:#4a8be0;"></div>
<div class="b" style="left:513px;top:672px;width:1px;height:19px;background:#4a8be0;"></div>
<div class="b" style="left:638px;top:672px;width:1px;height:19px;background:#4a8be0;"></div>
<div class="b" style="left:742px;top:672px;width:1px;height:19px;background:#4a8be0;"></div>
<div class="b" style="left:846px;top:672px;width:1px;height:19px;background:#4a8be0;"></div>
<div class="b" style="left:944px;top:672px;width:1px;height:19px;background:#4a8be0;"></div>
<div class="b" style="left:1042px;top:672px;width:1px;height:19px;background:#4a8be0;"></div>
<div class="b" style="left:1146px;top:672px;width:1px;height:19px;background:#4a8be0;"></div>
<div class="b" style="left:1215px;top:672px;width:1px;height:19px;background:#4a8be0;"></div>
<div class="b" style="left:36px;top:676px;width:9px;height:9px;background:#fff;border:1px solid #8a8a8a;"></div>
<span class="t" style="left:83.00px;top:675px;font-size:11px;line-height:14px;color:#000;font-family:'DejaVu Sans',sans-serif;letter-spacing:-0.450px;transform:scaleX(0.8781);transform-origin:0 0;">44</span>
<span class="t" style="left:132.00px;top:675px;font-size:11px;line-height:14px;color:#000;font-family:'DejaVu Sans',sans-serif;letter-spacing:-0.163px;">1_Pg_tiff_FUJITSU.tif</span>
<span class="t" style="left:337.00px;top:675px;font-size:11px;line-height:14px;color:#000;font-family:'DejaVu Sans',sans-serif;letter-spacing:-0.593px;">2013-12-19</span>
<span class="t" style="left:403.00px;top:675px;font-size:11px;line-height:14px;color:#000;font-family:'DejaVu Sans',sans-serif;letter-spacing:-0.256px;">Constituent</span>
<span class="t" style="left:519.00px;top:675px;font-size:11px;line-height:14px;color:#000;font-family:'DejaVu Sans',sans-serif;letter-spacing:-0.137px;">Constituent Docum...</span>
<span class="t" style="left:644.00px;top:675px;font-size:11px;line-height:14px;color:#000;font-family:'DejaVu Sans',sans-serif;letter-spacing:-0.603px;">Data_Entry</span>
<span class="t" style="left:747.00px;top:675px;font-size:11px;line-height:14px;color:#000;font-family:'DejaVu Sans',sans-serif;letter-spacing:-0.339px;">James Smith</span>
<div class="b" style="left:2px;top:619px;width:1512px;height:128px;border:2px solid #c00000;"></div>
<div class="b" style="left:270px;top:621px;width:22px;height:22px;background:#c00000;"></div>
<span class="t" style="left:276.57px;top:620.5px;font-size:16.5px;line-height:20px;color:#fff;font-weight:700;font-family:'Liberation Serif',serif;-webkit-text-stroke:.45px #fff;transform:scaleX(1.14);transform-origin:50% 50%;">6</span>
<div class="b" style="left:4px;top:754px;width:1512px;height:25px;background:linear-gradient(#ffffff,#f4efef 50%,#e6dede);"></div>
<div class="b" style="left:5px;top:758px;width:2px;height:2px;background:#b5b5b5;"></div>
<div class="b" style="left:5px;top:762px;width:2px;height:2px;background:#b5b5b5;"></div>
<div class="b" style="left:5px;top:766px;width:2px;height:2px;background:#b5b5b5;"></div>
<div class="b" style="left:5px;top:770px;width:2px;height:2px;background:#b5b5b5;"></div>
<div class="b" style="left:5px;top:774px;width:2px;height:2px;background:#b5b5b5;"></div>
<svg class="b" style="left:15.5px;top:763.5px" width="9.5" height="6" viewBox="0 0 11 9"><path d="M1 0v9" stroke="#b2b2b2" stroke-width="1.600"/><path d="M10 .5v8L3 4.500z" fill="#b2b2b2"/></svg>
<svg class="b" style="left:38px;top:763.5px" width="11" height="6" viewBox="0 0 13 9"><path d="M6 .5v8L0 4.500zM13 .5v8L7 4.500z" fill="#b2b2b2"/></svg>
<div class="b" style="left:59px;top:760px;width:1px;height:15px;background:#7d7d7d;"></div>
<span class="t" style="left:64.00px;top:761px;font-size:11px;line-height:14px;color:#3a6fb4;font-family:'DejaVu Sans',sans-serif;letter-spacing:-0.657px;">Page</span>
<div class="b" style="left:93px;top:757px;width:51px;height:21px;background:#fff;"></div>
<span class="t" style="left:97.00px;top:762px;font-size:11px;line-height:14px;color:#000;font-family:'DejaVu Sans',sans-serif;">1</span>
<span class="t" style="left:148.00px;top:761px;font-size:11px;line-height:14px;color:#3a6fb4;font-family:'DejaVu Sans',sans-serif;letter-spacing:-0.450px;transform:scaleX(0.9328);transform-origin:0 0;">of 1</span>
<div class="b" style="left:174px;top:760px;width:1px;height:15px;background:#7d7d7d;"></div>
<svg class="b" style="left:182px;top:763.5px" width="11" height="6" viewBox="0 0 13 9"><path d="M0 .5v8L6 4.500zM7 .5v8L13 4.500z" fill="#b2b2b2"/></svg>
<svg class="b" style="left:206px;top:763.5px" width="9.5" height="6" viewBox="0 0 11 9"><path d="M10 0v9" stroke="#b2b2b2" stroke-width="1.600"/><path d="M1 .5v8L8 4.500z" fill="#b2b2b2"/></svg>
<span class="t" style="left:225.50px;top:761px;font-size:11px;line-height:14px;color:#3a6fb4;font-family:'DejaVu Sans',sans-serif;letter-spacing:-0.628px;">Page Size :</span>
<div class="b" style="left:284px;top:757px;width:75px;height:21px;background:#fff;"></div>
<span class="t" style="left:287.60px;top:762px;font-size:11px;line-height:14px;color:#000;font-family:'DejaVu Sans',sans-serif;letter-spacing:-0.749px;">50</span>
<div class="b" style="left:348px;top:758px;width:11px;height:19px;background:#e4e2de;"></div>
<svg class="b" style="left:350.5px;top:766px" width="7" height="4" viewBox="0 0 7 4"><path d="M0 0h6l-3 3.500z" fill="#000"/></svg>
<span class="t" style="left:1449.50px;top:760px;font-size:11px;line-height:14px;color:#3a6fb4;font-family:'DejaVu Sans',sans-serif;letter-spacing:-0.450px;transform:scaleX(0.9350);transform-origin:0 0;">View 1-1 of 1</span>
<div class="b" style="left:2px;top:752px;width:1512px;height:25px;border:2px solid #c00000;"></div>
<div class="b" style="left:385px;top:754px;width:22px;height:22px;background:#c00000;"></div>
<span class="t" style="left:391.57px;top:753.5px;font-size:16.5px;line-height:20px;color:#fff;font-weight:700;font-family:'Liberation Serif',serif;-webkit-text-stroke:.45px #fff;transform:scaleX(1.14);transform-origin:50% 50%;">7</span>
<div class="b" style="left:3px;top:781px;width:1516px;height:31px;background:#4189e6;"></div>
<span class="t" style="left:7.50px;top:790px;font-size:11.5px;line-height:14px;color:#fff;letter-spacing:0.090px;">Constituent WF2</span>
<span class="t" style="left:219.30px;top:790px;font-size:11.5px;line-height:14px;color:#fff;letter-spacing:-0.192px;">Step: Data_Entry</span>
<span class="t" style="left:432.50px;top:790px;font-size:11.5px;line-height:14px;color:#fff;letter-spacing:-0.450px;transform:scaleX(0.8901);transform-origin:0 0;">TIFF</span>
<span class="t" style="left:855.00px;top:790px;font-size:11.5px;line-height:14px;color:#fff;letter-spacing:0.012px;">Items: 1</span>
<span class="t" style="left:1067.00px;top:790px;font-size:11.5px;line-height:14px;color:#fff;letter-spacing:-0.040px;">Owner :James Smith</span>
<span class="t" style="left:1412.50px;top:790px;font-size:11.5px;line-height:14px;color:#fff;letter-spacing:-0.168px;">Page: 1 of 1</span>
<div class="b" style="left:213px;top:785px;width:1px;height:25px;background:#6f83aa;"></div>
<div class="b" style="left:216px;top:785px;width:1px;height:25px;background:#6f83aa;"></div>
<div class="b" style="left:426px;top:785px;width:1px;height:25px;background:#6f83aa;"></div>
<div class="b" style="left:429px;top:785px;width:1px;height:25px;background:#6f83aa;"></div>
<div class="b" style="left:637px;top:785px;width:1px;height:25px;background:#6f83aa;"></div>
<div class="b" style="left:640px;top:785px;width:1px;height:25px;background:#6f83aa;"></div>
<div class="b" style="left:848px;top:785px;width:1px;height:25px;background:#6f83aa;"></div>
<div class="b" style="left:851px;top:785px;width:1px;height:25px;background:#6f83aa;"></div>
<div class="b" style="left:1060px;top:785px;width:1px;height:25px;background:#6f83aa;"></div>
<div class="b" style="left:1063px;top:785px;width:1px;height:25px;background:#6f83aa;"></div>
<div class="b" style="left:1263px;top:785px;width:1px;height:25px;background:#6f83aa;"></div>
<div class="b" style="left:1266px;top:785px;width:1px;height:25px;background:#6f83aa;"></div>
<div class="b" style="left:1476px;top:785px;width:1px;height:24px;background:#6f83aa;"></div>
<svg class="b" style="left:1506px;top:799px" width="10" height="10" viewBox="0 0 10 10"><path d="M9 1L1 9M9 5L5 9M9 8.500l-.5 .5" stroke="#b9c9e4" stroke-width="1"/></svg>
<div class="b" style="left:2px;top:783px;width:1512px;height:25px;border:2px solid #c00000;"></div>
<div class="b" style="left:595px;top:786px;width:22px;height:22px;background:#c00000;"></div>
<span class="t" style="left:601.58px;top:785.5px;font-size:16.5px;line-height:20px;color:#fff;font-weight:700;font-family:'Liberation Serif',serif;-webkit-text-stroke:.45px #fff;transform:scaleX(1.14);transform-origin:50% 50%;">9</span>
<div class="b" style="left:0px;top:812px;width:1522px;height:3px;background:#e6edf6;"></div>
</div>
</body></html>
